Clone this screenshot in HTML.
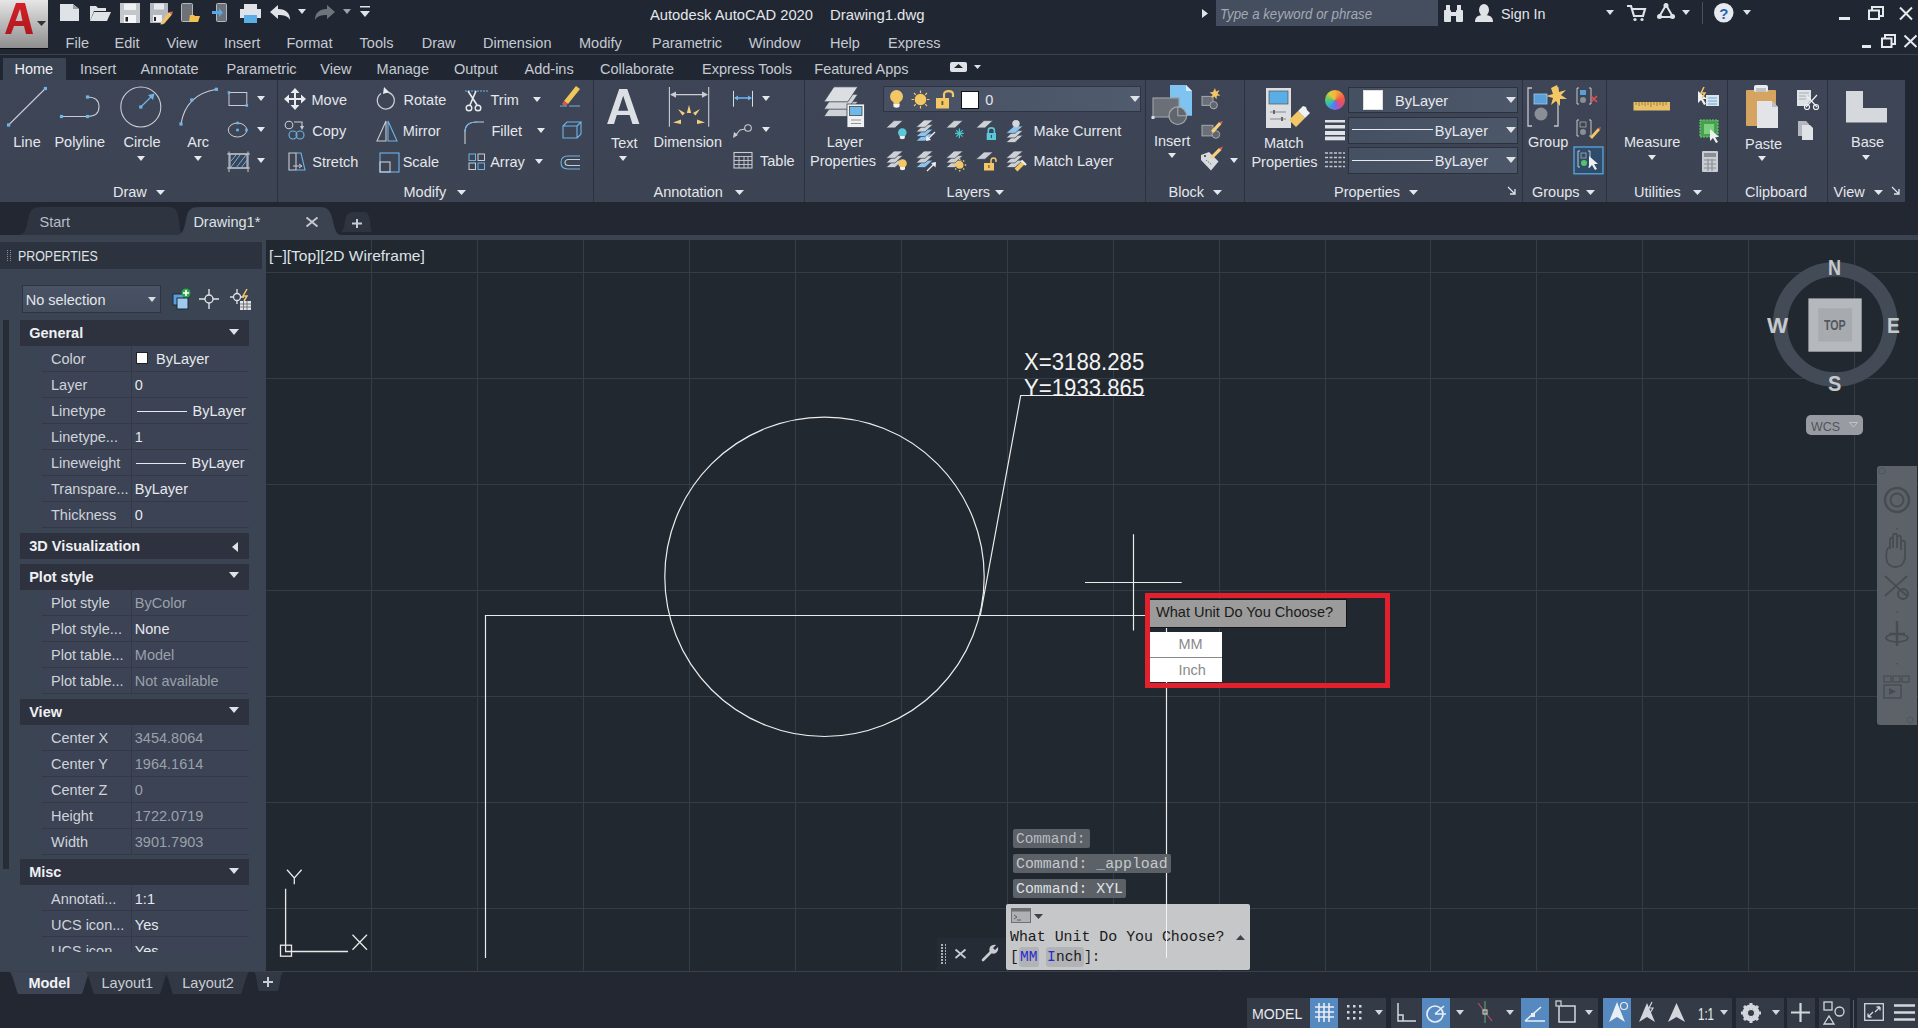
<!DOCTYPE html><html><head><meta charset="utf-8"><style>
html,body{margin:0;padding:0;width:1918px;height:1028px;overflow:hidden;background:#212732;}
.t{position:absolute;white-space:nowrap;line-height:1;}
.b{position:absolute;}
svg.b{overflow:visible;}
</style></head><body>
<div class="b" style="left:0px;top:0px;width:1918px;height:54px;background:#212732;"></div>
<div class="b" style="left:0px;top:54px;width:1918px;height:1px;background:#3b424d;"></div>
<div class="b" style="left:0px;top:55px;width:1918px;height:25px;background:#212732;"></div>
<div class="b" style="left:3px;top:58px;width:63px;height:22px;background:#3b4453;"></div>
<div class="b" style="left:0px;top:80px;width:277px;height:122px;background:linear-gradient(#3e4556,#3c4353);"></div>
<div class="b" style="left:278px;top:80px;width:315px;height:122px;background:linear-gradient(#3e4556,#3c4353);"></div>
<div class="b" style="left:594px;top:80px;width:210px;height:122px;background:linear-gradient(#3e4556,#3c4353);"></div>
<div class="b" style="left:805px;top:80px;width:340px;height:122px;background:linear-gradient(#3e4556,#3c4353);"></div>
<div class="b" style="left:1146px;top:80px;width:98px;height:122px;background:linear-gradient(#3e4556,#3c4353);"></div>
<div class="b" style="left:1245px;top:80px;width:277px;height:122px;background:linear-gradient(#3e4556,#3c4353);"></div>
<div class="b" style="left:1523px;top:80px;width:83px;height:122px;background:linear-gradient(#3e4556,#3c4353);"></div>
<div class="b" style="left:1607px;top:80px;width:120px;height:122px;background:linear-gradient(#3e4556,#3c4353);"></div>
<div class="b" style="left:1728px;top:80px;width:99px;height:122px;background:linear-gradient(#3e4556,#3c4353);"></div>
<div class="b" style="left:1828px;top:80px;width:77px;height:122px;background:linear-gradient(#3e4556,#3c4353);"></div>
<div class="b" style="left:277px;top:80px;width:1px;height:122px;background:#2c323d;"></div>
<div class="b" style="left:593px;top:80px;width:1px;height:122px;background:#2c323d;"></div>
<div class="b" style="left:804px;top:80px;width:1px;height:122px;background:#2c323d;"></div>
<div class="b" style="left:1145px;top:80px;width:1px;height:122px;background:#2c323d;"></div>
<div class="b" style="left:1244px;top:80px;width:1px;height:122px;background:#2c323d;"></div>
<div class="b" style="left:1522px;top:80px;width:1px;height:122px;background:#2c323d;"></div>
<div class="b" style="left:1606px;top:80px;width:1px;height:122px;background:#2c323d;"></div>
<div class="b" style="left:1727px;top:80px;width:1px;height:122px;background:#2c323d;"></div>
<div class="b" style="left:1827px;top:80px;width:1px;height:122px;background:#2c323d;"></div>
<div class="b" style="left:0px;top:202px;width:1918px;height:33px;background:#222731;"></div>
<div class="b" style="left:0px;top:235px;width:1918px;height:5px;background:#3b4250;"></div>
<svg class="b" style="left:18px;top:207px" width="165" height="28" viewBox="0 0 165 28"><path d="M0 28 C6 28 8 24 10 12 C12 3 14 0 24 0 H150 C158 0 160 4 161 14 C162 24 163 28 165 28Z" fill="#2e3440"/></svg>
<svg class="b" style="left:176px;top:207px" width="165" height="28" viewBox="0 0 165 28"><path d="M0 28 C6 28 8 24 10 12 C12 3 14 0 24 0 H144 C152 0 155 4 157 14 C159 24 161 28 165 28Z" fill="#3b4250"/></svg>
<svg class="b" style="left:340px;top:212px" width="32" height="20" viewBox="0 0 32 20"><path d="M0 20 C3 20 4 16 5 9 C6 3 8 0 13 0 H24 C28 0 29 3 30 9 C31 16 31 20 32 20Z" fill="#2e3440"/></svg>
<div class="b" style="left:0px;top:240px;width:266px;height:731px;background:#3b4453;"></div>
<div class="b" style="left:0px;top:242px;width:262px;height:27px;background:#2d333e;"></div>
<div class="b" style="left:266px;top:240px;width:1652px;height:731px;background:#212830;"></div>
<div class="b" style="left:0px;top:971px;width:1918px;height:57px;background:#222731;"></div>
<div class="t" style="left:649.5px;top:7.3px;font-size:15px;color:#e3e6ea;font-weight:normal;font-family:'Liberation Sans', sans-serif;font-style:normal;transform:scaleX(0.982);transform-origin:0 0;">Autodesk AutoCAD 2020</div>
<div class="t" style="left:829.5px;top:7.3px;font-size:15px;color:#e3e6ea;font-weight:normal;font-family:'Liberation Sans', sans-serif;font-style:normal;transform:scaleX(0.994);transform-origin:0 0;">Drawing1.dwg</div>
<div class="t" style="left:65.6px;top:36.0px;font-size:14.5px;color:#c5cad2;font-weight:normal;font-family:'Liberation Sans', sans-serif;font-style:normal;">File</div>
<div class="t" style="left:114.6px;top:36.0px;font-size:14.5px;color:#c5cad2;font-weight:normal;font-family:'Liberation Sans', sans-serif;font-style:normal;">Edit</div>
<div class="t" style="left:166.4px;top:36.0px;font-size:14.5px;color:#c5cad2;font-weight:normal;font-family:'Liberation Sans', sans-serif;font-style:normal;">View</div>
<div class="t" style="left:224px;top:36.0px;font-size:14.5px;color:#c5cad2;font-weight:normal;font-family:'Liberation Sans', sans-serif;font-style:normal;">Insert</div>
<div class="t" style="left:286.5px;top:36.0px;font-size:14.5px;color:#c5cad2;font-weight:normal;font-family:'Liberation Sans', sans-serif;font-style:normal;">Format</div>
<div class="t" style="left:359.6px;top:36.0px;font-size:14.5px;color:#c5cad2;font-weight:normal;font-family:'Liberation Sans', sans-serif;font-style:normal;">Tools</div>
<div class="t" style="left:421.7px;top:36.0px;font-size:14.5px;color:#c5cad2;font-weight:normal;font-family:'Liberation Sans', sans-serif;font-style:normal;">Draw</div>
<div class="t" style="left:483px;top:36.0px;font-size:14.5px;color:#c5cad2;font-weight:normal;font-family:'Liberation Sans', sans-serif;font-style:normal;">Dimension</div>
<div class="t" style="left:579px;top:36.0px;font-size:14.5px;color:#c5cad2;font-weight:normal;font-family:'Liberation Sans', sans-serif;font-style:normal;">Modify</div>
<div class="t" style="left:652px;top:36.0px;font-size:14.5px;color:#c5cad2;font-weight:normal;font-family:'Liberation Sans', sans-serif;font-style:normal;">Parametric</div>
<div class="t" style="left:748.8px;top:36.0px;font-size:14.5px;color:#c5cad2;font-weight:normal;font-family:'Liberation Sans', sans-serif;font-style:normal;">Window</div>
<div class="t" style="left:830px;top:36.0px;font-size:14.5px;color:#c5cad2;font-weight:normal;font-family:'Liberation Sans', sans-serif;font-style:normal;">Help</div>
<div class="t" style="left:888px;top:36.0px;font-size:14.5px;color:#c5cad2;font-weight:normal;font-family:'Liberation Sans', sans-serif;font-style:normal;">Express</div>
<div class="t" style="left:14.5px;top:61.5px;font-size:14.5px;color:#eef0f3;font-weight:normal;font-family:'Liberation Sans', sans-serif;font-style:normal;">Home</div>
<div class="t" style="left:80px;top:61.5px;font-size:14.5px;color:#c5cad2;font-weight:normal;font-family:'Liberation Sans', sans-serif;font-style:normal;">Insert</div>
<div class="t" style="left:140.6px;top:61.5px;font-size:14.5px;color:#c5cad2;font-weight:normal;font-family:'Liberation Sans', sans-serif;font-style:normal;">Annotate</div>
<div class="t" style="left:226.5px;top:61.5px;font-size:14.5px;color:#c5cad2;font-weight:normal;font-family:'Liberation Sans', sans-serif;font-style:normal;">Parametric</div>
<div class="t" style="left:320.3px;top:61.5px;font-size:14.5px;color:#c5cad2;font-weight:normal;font-family:'Liberation Sans', sans-serif;font-style:normal;">View</div>
<div class="t" style="left:376.6px;top:61.5px;font-size:14.5px;color:#c5cad2;font-weight:normal;font-family:'Liberation Sans', sans-serif;font-style:normal;">Manage</div>
<div class="t" style="left:454px;top:61.5px;font-size:14.5px;color:#c5cad2;font-weight:normal;font-family:'Liberation Sans', sans-serif;font-style:normal;">Output</div>
<div class="t" style="left:524.5px;top:61.5px;font-size:14.5px;color:#c5cad2;font-weight:normal;font-family:'Liberation Sans', sans-serif;font-style:normal;">Add-ins</div>
<div class="t" style="left:600px;top:61.5px;font-size:14.5px;color:#c5cad2;font-weight:normal;font-family:'Liberation Sans', sans-serif;font-style:normal;">Collaborate</div>
<div class="t" style="left:702px;top:61.5px;font-size:14.5px;color:#c5cad2;font-weight:normal;font-family:'Liberation Sans', sans-serif;font-style:normal;">Express Tools</div>
<div class="t" style="left:814.3px;top:61.5px;font-size:14.5px;color:#c5cad2;font-weight:normal;font-family:'Liberation Sans', sans-serif;font-style:normal;">Featured Apps</div>
<div class="t" style="left:113px;top:184.7px;font-size:14.5px;color:#e4e7eb;font-weight:normal;font-family:'Liberation Sans', sans-serif;font-style:normal;">Draw</div>
<svg class="b" style="left:155.5px;top:189.5px;" width="9" height="5" viewBox="0 0 9 5"><path d="M0 0H9L4.5 5Z" fill="#e4e7eb"/></svg>
<div class="t" style="left:403.5px;top:184.7px;font-size:14.5px;color:#e4e7eb;font-weight:normal;font-family:'Liberation Sans', sans-serif;font-style:normal;">Modify</div>
<svg class="b" style="left:457.3px;top:189.5px;" width="9" height="5" viewBox="0 0 9 5"><path d="M0 0H9L4.5 5Z" fill="#e4e7eb"/></svg>
<div class="t" style="left:653.5px;top:184.7px;font-size:14.5px;color:#e4e7eb;font-weight:normal;font-family:'Liberation Sans', sans-serif;font-style:normal;">Annotation</div>
<svg class="b" style="left:735.2px;top:189.5px;" width="9" height="5" viewBox="0 0 9 5"><path d="M0 0H9L4.5 5Z" fill="#e4e7eb"/></svg>
<div class="t" style="left:946.6px;top:184.7px;font-size:14.5px;color:#e4e7eb;font-weight:normal;font-family:'Liberation Sans', sans-serif;font-style:normal;">Layers</div>
<svg class="b" style="left:994.5px;top:189.5px;" width="9" height="5" viewBox="0 0 9 5"><path d="M0 0H9L4.5 5Z" fill="#e4e7eb"/></svg>
<div class="t" style="left:1168.5px;top:184.7px;font-size:14.5px;color:#e4e7eb;font-weight:normal;font-family:'Liberation Sans', sans-serif;font-style:normal;">Block</div>
<svg class="b" style="left:1212.5px;top:189.5px;" width="9" height="5" viewBox="0 0 9 5"><path d="M0 0H9L4.5 5Z" fill="#e4e7eb"/></svg>
<div class="t" style="left:1334px;top:184.7px;font-size:14.5px;color:#e4e7eb;font-weight:normal;font-family:'Liberation Sans', sans-serif;font-style:normal;">Properties</div>
<svg class="b" style="left:1408.9px;top:189.5px;" width="9" height="5" viewBox="0 0 9 5"><path d="M0 0H9L4.5 5Z" fill="#e4e7eb"/></svg>
<div class="t" style="left:1532px;top:184.7px;font-size:14.5px;color:#e4e7eb;font-weight:normal;font-family:'Liberation Sans', sans-serif;font-style:normal;">Groups</div>
<svg class="b" style="left:1585.5px;top:189.5px;" width="9" height="5" viewBox="0 0 9 5"><path d="M0 0H9L4.5 5Z" fill="#e4e7eb"/></svg>
<div class="t" style="left:1634px;top:184.7px;font-size:14.5px;color:#e4e7eb;font-weight:normal;font-family:'Liberation Sans', sans-serif;font-style:normal;">Utilities</div>
<svg class="b" style="left:1692.5px;top:189.5px;" width="9" height="5" viewBox="0 0 9 5"><path d="M0 0H9L4.5 5Z" fill="#e4e7eb"/></svg>
<div class="t" style="left:1745px;top:184.7px;font-size:14.5px;color:#e4e7eb;font-weight:normal;font-family:'Liberation Sans', sans-serif;font-style:normal;">Clipboard</div>
<div class="t" style="left:1833.5px;top:184.7px;font-size:14.5px;color:#e4e7eb;font-weight:normal;font-family:'Liberation Sans', sans-serif;font-style:normal;">View</div>
<svg class="b" style="left:1874.0px;top:189.5px;" width="9" height="5" viewBox="0 0 9 5"><path d="M0 0H9L4.5 5Z" fill="#e4e7eb"/></svg>
<div class="t" style="left:13.3px;top:134.7px;font-size:14.5px;color:#e4e7eb;font-weight:normal;font-family:'Liberation Sans', sans-serif;font-style:normal;">Line</div>
<div class="t" style="left:54.4px;top:134.7px;font-size:14.5px;color:#e4e7eb;font-weight:normal;font-family:'Liberation Sans', sans-serif;font-style:normal;">Polyline</div>
<div class="t" style="left:123.6px;top:134.7px;font-size:14.5px;color:#e4e7eb;font-weight:normal;font-family:'Liberation Sans', sans-serif;font-style:normal;">Circle</div>
<div class="t" style="left:187.3px;top:134.7px;font-size:14.5px;color:#e4e7eb;font-weight:normal;font-family:'Liberation Sans', sans-serif;font-style:normal;">Arc</div>
<svg class="b" style="left:137.0px;top:155.5px;" width="8" height="5" viewBox="0 0 8 5"><path d="M0 0H8L4.0 5Z" fill="#e4e7eb"/></svg>
<svg class="b" style="left:194.4px;top:155.5px;" width="8" height="5" viewBox="0 0 8 5"><path d="M0 0H8L4.0 5Z" fill="#e4e7eb"/></svg>
<div class="t" style="left:311.5px;top:92.7px;font-size:14.5px;color:#e4e7eb;font-weight:normal;font-family:'Liberation Sans', sans-serif;font-style:normal;">Move</div>
<div class="t" style="left:403.5px;top:92.7px;font-size:14.5px;color:#e4e7eb;font-weight:normal;font-family:'Liberation Sans', sans-serif;font-style:normal;">Rotate</div>
<div class="t" style="left:490.5px;top:92.7px;font-size:14.5px;color:#e4e7eb;font-weight:normal;font-family:'Liberation Sans', sans-serif;font-style:normal;">Trim</div>
<div class="t" style="left:312.3px;top:123.7px;font-size:14.5px;color:#e4e7eb;font-weight:normal;font-family:'Liberation Sans', sans-serif;font-style:normal;">Copy</div>
<div class="t" style="left:402.7px;top:123.7px;font-size:14.5px;color:#e4e7eb;font-weight:normal;font-family:'Liberation Sans', sans-serif;font-style:normal;">Mirror</div>
<div class="t" style="left:491.4px;top:123.7px;font-size:14.5px;color:#e4e7eb;font-weight:normal;font-family:'Liberation Sans', sans-serif;font-style:normal;">Fillet</div>
<div class="t" style="left:312.3px;top:154.7px;font-size:14.5px;color:#e4e7eb;font-weight:normal;font-family:'Liberation Sans', sans-serif;font-style:normal;">Stretch</div>
<div class="t" style="left:402.7px;top:154.7px;font-size:14.5px;color:#e4e7eb;font-weight:normal;font-family:'Liberation Sans', sans-serif;font-style:normal;">Scale</div>
<div class="t" style="left:490.2px;top:154.7px;font-size:14.5px;color:#e4e7eb;font-weight:normal;font-family:'Liberation Sans', sans-serif;font-style:normal;">Array</div>
<svg class="b" style="left:533.0px;top:96.5px;" width="8" height="5" viewBox="0 0 8 5"><path d="M0 0H8L4.0 5Z" fill="#e4e7eb"/></svg>
<svg class="b" style="left:536.9px;top:127.5px;" width="8" height="5" viewBox="0 0 8 5"><path d="M0 0H8L4.0 5Z" fill="#e4e7eb"/></svg>
<svg class="b" style="left:534.7px;top:158.5px;" width="8" height="5" viewBox="0 0 8 5"><path d="M0 0H8L4.0 5Z" fill="#e4e7eb"/></svg>
<svg class="b" style="left:257.0px;top:95.5px;" width="8" height="5" viewBox="0 0 8 5"><path d="M0 0H8L4.0 5Z" fill="#e4e7eb"/></svg>
<svg class="b" style="left:257.0px;top:127.1px;" width="8" height="5" viewBox="0 0 8 5"><path d="M0 0H8L4.0 5Z" fill="#e4e7eb"/></svg>
<svg class="b" style="left:257.0px;top:158.1px;" width="8" height="5" viewBox="0 0 8 5"><path d="M0 0H8L4.0 5Z" fill="#e4e7eb"/></svg>
<div class="t" style="left:611px;top:136.0px;font-size:14.5px;color:#e4e7eb;font-weight:normal;font-family:'Liberation Sans', sans-serif;font-style:normal;">Text</div>
<svg class="b" style="left:619.0px;top:155.7px;" width="8" height="5" viewBox="0 0 8 5"><path d="M0 0H8L4.0 5Z" fill="#e4e7eb"/></svg>
<div class="t" style="left:653.5px;top:134.7px;font-size:14.5px;color:#e4e7eb;font-weight:normal;font-family:'Liberation Sans', sans-serif;font-style:normal;">Dimension</div>
<div class="t" style="left:760px;top:154.2px;font-size:14.5px;color:#e4e7eb;font-weight:normal;font-family:'Liberation Sans', sans-serif;font-style:normal;">Table</div>
<svg class="b" style="left:762.0px;top:95.9px;" width="8" height="5" viewBox="0 0 8 5"><path d="M0 0H8L4.0 5Z" fill="#e4e7eb"/></svg>
<svg class="b" style="left:762.0px;top:126.9px;" width="8" height="5" viewBox="0 0 8 5"><path d="M0 0H8L4.0 5Z" fill="#e4e7eb"/></svg>
<div class="t" style="left:826.7px;top:134.7px;font-size:14.5px;color:#e4e7eb;font-weight:normal;font-family:'Liberation Sans', sans-serif;font-style:normal;">Layer</div>
<div class="t" style="left:810px;top:154.2px;font-size:14.5px;color:#e4e7eb;font-weight:normal;font-family:'Liberation Sans', sans-serif;font-style:normal;">Properties</div>
<div class="t" style="left:1033.5px;top:123.7px;font-size:14.5px;color:#e4e7eb;font-weight:normal;font-family:'Liberation Sans', sans-serif;font-style:normal;">Make Current</div>
<div class="t" style="left:1033.5px;top:154.0px;font-size:14.5px;color:#e4e7eb;font-weight:normal;font-family:'Liberation Sans', sans-serif;font-style:normal;">Match Layer</div>
<div class="t" style="left:1154px;top:133.7px;font-size:14.5px;color:#e4e7eb;font-weight:normal;font-family:'Liberation Sans', sans-serif;font-style:normal;">Insert</div>
<svg class="b" style="left:1167.5px;top:152.5px;" width="8" height="5" viewBox="0 0 8 5"><path d="M0 0H8L4.0 5Z" fill="#e4e7eb"/></svg>
<svg class="b" style="left:1230.0px;top:157.5px;" width="8" height="5" viewBox="0 0 8 5"><path d="M0 0H8L4.0 5Z" fill="#e4e7eb"/></svg>
<div class="t" style="left:1264px;top:135.7px;font-size:14.5px;color:#e4e7eb;font-weight:normal;font-family:'Liberation Sans', sans-serif;font-style:normal;">Match</div>
<div class="t" style="left:1251.4px;top:155.1px;font-size:14.5px;color:#e4e7eb;font-weight:normal;font-family:'Liberation Sans', sans-serif;font-style:normal;">Properties</div>
<div class="t" style="left:1528px;top:135.2px;font-size:14.5px;color:#e4e7eb;font-weight:normal;font-family:'Liberation Sans', sans-serif;font-style:normal;">Group</div>
<div class="t" style="left:1624px;top:135.2px;font-size:14.5px;color:#e4e7eb;font-weight:normal;font-family:'Liberation Sans', sans-serif;font-style:normal;">Measure</div>
<svg class="b" style="left:1647.8px;top:155.0px;" width="8" height="5" viewBox="0 0 8 5"><path d="M0 0H8L4.0 5Z" fill="#e4e7eb"/></svg>
<div class="t" style="left:1745px;top:136.5px;font-size:14.5px;color:#e4e7eb;font-weight:normal;font-family:'Liberation Sans', sans-serif;font-style:normal;">Paste</div>
<svg class="b" style="left:1757.8px;top:156.3px;" width="8" height="5" viewBox="0 0 8 5"><path d="M0 0H8L4.0 5Z" fill="#e4e7eb"/></svg>
<div class="t" style="left:1851px;top:135.2px;font-size:14.5px;color:#e4e7eb;font-weight:normal;font-family:'Liberation Sans', sans-serif;font-style:normal;">Base</div>
<svg class="b" style="left:1862.0px;top:154.5px;" width="8" height="5" viewBox="0 0 8 5"><path d="M0 0H8L4.0 5Z" fill="#e4e7eb"/></svg>
<div class="t" style="left:18px;top:248.9px;font-size:14.5px;color:#dfe2e7;font-weight:normal;font-family:'Liberation Sans', sans-serif;font-style:normal;transform:scaleX(0.855);transform-origin:0 0;">PROPERTIES</div>
<div class="b" style="left:7px;top:250px;width:1px;height:1px;background:#8a9099;"></div>
<div class="b" style="left:10px;top:250px;width:1px;height:1px;background:#8a9099;"></div>
<div class="b" style="left:7px;top:252px;width:1px;height:1px;background:#8a9099;"></div>
<div class="b" style="left:10px;top:252px;width:1px;height:1px;background:#8a9099;"></div>
<div class="b" style="left:7px;top:254px;width:1px;height:1px;background:#8a9099;"></div>
<div class="b" style="left:10px;top:254px;width:1px;height:1px;background:#8a9099;"></div>
<div class="b" style="left:7px;top:256px;width:1px;height:1px;background:#8a9099;"></div>
<div class="b" style="left:10px;top:256px;width:1px;height:1px;background:#8a9099;"></div>
<div class="b" style="left:7px;top:258px;width:1px;height:1px;background:#8a9099;"></div>
<div class="b" style="left:10px;top:258px;width:1px;height:1px;background:#8a9099;"></div>
<div class="b" style="left:7px;top:260px;width:1px;height:1px;background:#8a9099;"></div>
<div class="b" style="left:10px;top:260px;width:1px;height:1px;background:#8a9099;"></div>
<div class="b" style="left:22px;top:285px;width:139px;height:28px;background:linear-gradient(#4a5365,#434c5d);border:1px solid #2f3540;box-sizing:border-box;"></div>
<div class="t" style="left:25.7px;top:293.0px;font-size:14.5px;color:#e3e6ea;font-weight:normal;font-family:'Liberation Sans', sans-serif;font-style:normal;">No selection</div>
<svg class="b" style="left:147.7px;top:296.9px;" width="8" height="5" viewBox="0 0 8 5"><path d="M0 0H8L4.0 5Z" fill="#d8dce2"/></svg>
<div class="b" style="left:3px;top:320px;width:6px;height:549px;background:#272c35;"></div>
<div class="b" style="left:20px;top:320px;width:229px;height:26px;background:#2d323e;"></div>
<div class="t" style="left:29.2px;top:326.3px;font-size:14.5px;color:#eef0f3;font-weight:bold;font-family:'Liberation Sans', sans-serif;font-style:normal;">General</div>
<svg class="b" style="left:229.0px;top:328.5px;" width="10" height="6" viewBox="0 0 10 6"><path d="M0 0H10L5.0 6Z" fill="#dfe2e7"/></svg>
<div class="b" style="left:42px;top:346px;width:207px;height:26px;background:#3c4354;"></div>
<div class="b" style="left:42px;top:371px;width:207px;height:1px;background:#333a46;"></div>
<div class="b" style="left:131px;top:346px;width:1px;height:26px;background:#333a46;"></div>
<div class="t" style="left:51px;top:352.3px;font-size:14.5px;color:#cfd3da;font-weight:normal;font-family:'Liberation Sans', sans-serif;font-style:normal;">Color</div>
<div class="b" style="left:42px;top:372px;width:207px;height:26px;background:#3c4354;"></div>
<div class="b" style="left:42px;top:397px;width:207px;height:1px;background:#333a46;"></div>
<div class="b" style="left:131px;top:372px;width:1px;height:26px;background:#333a46;"></div>
<div class="t" style="left:51px;top:378.3px;font-size:14.5px;color:#cfd3da;font-weight:normal;font-family:'Liberation Sans', sans-serif;font-style:normal;">Layer</div>
<div class="t" style="left:134.8px;top:378.3px;font-size:14.5px;color:#e6e9ed;font-weight:normal;font-family:'Liberation Sans', sans-serif;font-style:normal;">0</div>
<div class="b" style="left:42px;top:398px;width:207px;height:26px;background:#3c4354;"></div>
<div class="b" style="left:42px;top:423px;width:207px;height:1px;background:#333a46;"></div>
<div class="b" style="left:131px;top:398px;width:1px;height:26px;background:#333a46;"></div>
<div class="t" style="left:51px;top:404.3px;font-size:14.5px;color:#cfd3da;font-weight:normal;font-family:'Liberation Sans', sans-serif;font-style:normal;">Linetype</div>
<div class="b" style="left:42px;top:424px;width:207px;height:26px;background:#3c4354;"></div>
<div class="b" style="left:42px;top:449px;width:207px;height:1px;background:#333a46;"></div>
<div class="b" style="left:131px;top:424px;width:1px;height:26px;background:#333a46;"></div>
<div class="t" style="left:51px;top:430.3px;font-size:14.5px;color:#cfd3da;font-weight:normal;font-family:'Liberation Sans', sans-serif;font-style:normal;">Linetype...</div>
<div class="t" style="left:134.8px;top:430.3px;font-size:14.5px;color:#e6e9ed;font-weight:normal;font-family:'Liberation Sans', sans-serif;font-style:normal;">1</div>
<div class="b" style="left:42px;top:450px;width:207px;height:26px;background:#3c4354;"></div>
<div class="b" style="left:42px;top:475px;width:207px;height:1px;background:#333a46;"></div>
<div class="b" style="left:131px;top:450px;width:1px;height:26px;background:#333a46;"></div>
<div class="t" style="left:51px;top:456.3px;font-size:14.5px;color:#cfd3da;font-weight:normal;font-family:'Liberation Sans', sans-serif;font-style:normal;">Lineweight</div>
<div class="b" style="left:42px;top:476px;width:207px;height:26px;background:#3c4354;"></div>
<div class="b" style="left:42px;top:501px;width:207px;height:1px;background:#333a46;"></div>
<div class="b" style="left:131px;top:476px;width:1px;height:26px;background:#333a46;"></div>
<div class="t" style="left:51px;top:482.3px;font-size:14.5px;color:#cfd3da;font-weight:normal;font-family:'Liberation Sans', sans-serif;font-style:normal;">Transpare...</div>
<div class="t" style="left:134.8px;top:482.3px;font-size:14.5px;color:#e6e9ed;font-weight:normal;font-family:'Liberation Sans', sans-serif;font-style:normal;">ByLayer</div>
<div class="b" style="left:42px;top:502px;width:207px;height:26px;background:#3c4354;"></div>
<div class="b" style="left:42px;top:527px;width:207px;height:1px;background:#333a46;"></div>
<div class="b" style="left:131px;top:502px;width:1px;height:26px;background:#333a46;"></div>
<div class="t" style="left:51px;top:508.3px;font-size:14.5px;color:#cfd3da;font-weight:normal;font-family:'Liberation Sans', sans-serif;font-style:normal;">Thickness</div>
<div class="t" style="left:134.8px;top:508.3px;font-size:14.5px;color:#e6e9ed;font-weight:normal;font-family:'Liberation Sans', sans-serif;font-style:normal;">0</div>
<div class="b" style="left:137px;top:411px;width:50px;height:1px;background:#e6e9ed;"></div>
<div class="t" style="left:192.6px;top:404.3px;font-size:14.5px;color:#e6e9ed;font-weight:normal;font-family:'Liberation Sans', sans-serif;font-style:normal;">ByLayer</div>
<div class="b" style="left:136px;top:463px;width:50px;height:1px;background:#e6e9ed;"></div>
<div class="t" style="left:191.5px;top:456.3px;font-size:14.5px;color:#e6e9ed;font-weight:normal;font-family:'Liberation Sans', sans-serif;font-style:normal;">ByLayer</div>
<div class="b" style="left:136px;top:352px;width:12px;height:12px;background:#ffffff;border:1px solid #222;box-sizing:border-box;"></div>
<div class="t" style="left:156px;top:352.0px;font-size:14.5px;color:#e6e9ed;font-weight:normal;font-family:'Liberation Sans', sans-serif;font-style:normal;">ByLayer</div>
<div class="b" style="left:20px;top:532.5px;width:229px;height:26px;background:#2d323e;"></div>
<div class="t" style="left:29.2px;top:538.8px;font-size:14.5px;color:#eef0f3;font-weight:bold;font-family:'Liberation Sans', sans-serif;font-style:normal;">3D Visualization</div>
<svg class="b" style="left:232px;top:541.5px;" width="6" height="10" viewBox="0 0 6 10"><path d="M6 0V10L0 5Z" fill="#dfe2e7"/></svg>
<div class="b" style="left:20px;top:563.5px;width:229px;height:26px;background:#2d323e;"></div>
<div class="t" style="left:29.2px;top:569.8px;font-size:14.5px;color:#eef0f3;font-weight:bold;font-family:'Liberation Sans', sans-serif;font-style:normal;">Plot style</div>
<svg class="b" style="left:229.0px;top:572.0px;" width="10" height="6" viewBox="0 0 10 6"><path d="M0 0H10L5.0 6Z" fill="#dfe2e7"/></svg>
<div class="b" style="left:42px;top:589.5px;width:207px;height:26px;background:#3c4354;"></div>
<div class="b" style="left:42px;top:614.5px;width:207px;height:1px;background:#333a46;"></div>
<div class="b" style="left:131px;top:589.5px;width:1px;height:26px;background:#333a46;"></div>
<div class="t" style="left:51px;top:595.8px;font-size:14.5px;color:#cfd3da;font-weight:normal;font-family:'Liberation Sans', sans-serif;font-style:normal;">Plot style</div>
<div class="t" style="left:134.8px;top:595.8px;font-size:14.5px;color:#9aa1ab;font-weight:normal;font-family:'Liberation Sans', sans-serif;font-style:normal;">ByColor</div>
<div class="b" style="left:42px;top:615.5px;width:207px;height:26px;background:#3c4354;"></div>
<div class="b" style="left:42px;top:640.5px;width:207px;height:1px;background:#333a46;"></div>
<div class="b" style="left:131px;top:615.5px;width:1px;height:26px;background:#333a46;"></div>
<div class="t" style="left:51px;top:621.8px;font-size:14.5px;color:#cfd3da;font-weight:normal;font-family:'Liberation Sans', sans-serif;font-style:normal;">Plot style...</div>
<div class="t" style="left:134.8px;top:621.8px;font-size:14.5px;color:#e6e9ed;font-weight:normal;font-family:'Liberation Sans', sans-serif;font-style:normal;">None</div>
<div class="b" style="left:42px;top:641.5px;width:207px;height:26px;background:#3c4354;"></div>
<div class="b" style="left:42px;top:666.5px;width:207px;height:1px;background:#333a46;"></div>
<div class="b" style="left:131px;top:641.5px;width:1px;height:26px;background:#333a46;"></div>
<div class="t" style="left:51px;top:647.8px;font-size:14.5px;color:#cfd3da;font-weight:normal;font-family:'Liberation Sans', sans-serif;font-style:normal;">Plot table...</div>
<div class="t" style="left:134.8px;top:647.8px;font-size:14.5px;color:#9aa1ab;font-weight:normal;font-family:'Liberation Sans', sans-serif;font-style:normal;">Model</div>
<div class="b" style="left:42px;top:667.5px;width:207px;height:26px;background:#3c4354;"></div>
<div class="b" style="left:42px;top:692.5px;width:207px;height:1px;background:#333a46;"></div>
<div class="b" style="left:131px;top:667.5px;width:1px;height:26px;background:#333a46;"></div>
<div class="t" style="left:51px;top:673.8px;font-size:14.5px;color:#cfd3da;font-weight:normal;font-family:'Liberation Sans', sans-serif;font-style:normal;">Plot table...</div>
<div class="t" style="left:134.8px;top:673.8px;font-size:14.5px;color:#9aa1ab;font-weight:normal;font-family:'Liberation Sans', sans-serif;font-style:normal;">Not available</div>
<div class="b" style="left:20px;top:698.5px;width:229px;height:26px;background:#2d323e;"></div>
<div class="t" style="left:29.2px;top:704.8px;font-size:14.5px;color:#eef0f3;font-weight:bold;font-family:'Liberation Sans', sans-serif;font-style:normal;">View</div>
<svg class="b" style="left:229.0px;top:707.0px;" width="10" height="6" viewBox="0 0 10 6"><path d="M0 0H10L5.0 6Z" fill="#dfe2e7"/></svg>
<div class="b" style="left:42px;top:724.5px;width:207px;height:26px;background:#3c4354;"></div>
<div class="b" style="left:42px;top:749.5px;width:207px;height:1px;background:#333a46;"></div>
<div class="b" style="left:131px;top:724.5px;width:1px;height:26px;background:#333a46;"></div>
<div class="t" style="left:51px;top:730.8px;font-size:14.5px;color:#cfd3da;font-weight:normal;font-family:'Liberation Sans', sans-serif;font-style:normal;">Center X</div>
<div class="t" style="left:134.8px;top:730.8px;font-size:14.5px;color:#9aa1ab;font-weight:normal;font-family:'Liberation Sans', sans-serif;font-style:normal;">3454.8064</div>
<div class="b" style="left:42px;top:750.5px;width:207px;height:26px;background:#3c4354;"></div>
<div class="b" style="left:42px;top:775.5px;width:207px;height:1px;background:#333a46;"></div>
<div class="b" style="left:131px;top:750.5px;width:1px;height:26px;background:#333a46;"></div>
<div class="t" style="left:51px;top:756.8px;font-size:14.5px;color:#cfd3da;font-weight:normal;font-family:'Liberation Sans', sans-serif;font-style:normal;">Center Y</div>
<div class="t" style="left:134.8px;top:756.8px;font-size:14.5px;color:#9aa1ab;font-weight:normal;font-family:'Liberation Sans', sans-serif;font-style:normal;">1964.1614</div>
<div class="b" style="left:42px;top:776.5px;width:207px;height:26px;background:#3c4354;"></div>
<div class="b" style="left:42px;top:801.5px;width:207px;height:1px;background:#333a46;"></div>
<div class="b" style="left:131px;top:776.5px;width:1px;height:26px;background:#333a46;"></div>
<div class="t" style="left:51px;top:782.8px;font-size:14.5px;color:#cfd3da;font-weight:normal;font-family:'Liberation Sans', sans-serif;font-style:normal;">Center Z</div>
<div class="t" style="left:134.8px;top:782.8px;font-size:14.5px;color:#9aa1ab;font-weight:normal;font-family:'Liberation Sans', sans-serif;font-style:normal;">0</div>
<div class="b" style="left:42px;top:802.5px;width:207px;height:26px;background:#3c4354;"></div>
<div class="b" style="left:42px;top:827.5px;width:207px;height:1px;background:#333a46;"></div>
<div class="b" style="left:131px;top:802.5px;width:1px;height:26px;background:#333a46;"></div>
<div class="t" style="left:51px;top:808.8px;font-size:14.5px;color:#cfd3da;font-weight:normal;font-family:'Liberation Sans', sans-serif;font-style:normal;">Height</div>
<div class="t" style="left:134.8px;top:808.8px;font-size:14.5px;color:#9aa1ab;font-weight:normal;font-family:'Liberation Sans', sans-serif;font-style:normal;">1722.0719</div>
<div class="b" style="left:42px;top:828.5px;width:207px;height:26px;background:#3c4354;"></div>
<div class="b" style="left:42px;top:853.5px;width:207px;height:1px;background:#333a46;"></div>
<div class="b" style="left:131px;top:828.5px;width:1px;height:26px;background:#333a46;"></div>
<div class="t" style="left:51px;top:834.8px;font-size:14.5px;color:#cfd3da;font-weight:normal;font-family:'Liberation Sans', sans-serif;font-style:normal;">Width</div>
<div class="t" style="left:134.8px;top:834.8px;font-size:14.5px;color:#9aa1ab;font-weight:normal;font-family:'Liberation Sans', sans-serif;font-style:normal;">3901.7903</div>
<div class="b" style="left:20px;top:859px;width:229px;height:26px;background:#2d323e;"></div>
<div class="t" style="left:29.2px;top:865.3px;font-size:14.5px;color:#eef0f3;font-weight:bold;font-family:'Liberation Sans', sans-serif;font-style:normal;">Misc</div>
<svg class="b" style="left:229.0px;top:867.5px;" width="10" height="6" viewBox="0 0 10 6"><path d="M0 0H10L5.0 6Z" fill="#dfe2e7"/></svg>
<div class="b" style="left:42px;top:885.4px;width:207px;height:26px;background:#3c4354;"></div>
<div class="b" style="left:42px;top:910.4px;width:207px;height:1px;background:#333a46;"></div>
<div class="b" style="left:131px;top:885.4px;width:1px;height:26px;background:#333a46;"></div>
<div class="t" style="left:51px;top:891.7px;font-size:14.5px;color:#cfd3da;font-weight:normal;font-family:'Liberation Sans', sans-serif;font-style:normal;">Annotati...</div>
<div class="t" style="left:134.8px;top:891.7px;font-size:14.5px;color:#e6e9ed;font-weight:normal;font-family:'Liberation Sans', sans-serif;font-style:normal;">1:1</div>
<div class="b" style="left:42px;top:911.4px;width:207px;height:26px;background:#3c4354;"></div>
<div class="b" style="left:42px;top:936.4px;width:207px;height:1px;background:#333a46;"></div>
<div class="b" style="left:131px;top:911.4px;width:1px;height:26px;background:#333a46;"></div>
<div class="t" style="left:51px;top:917.7px;font-size:14.5px;color:#cfd3da;font-weight:normal;font-family:'Liberation Sans', sans-serif;font-style:normal;">UCS icon...</div>
<div class="t" style="left:134.8px;top:917.7px;font-size:14.5px;color:#e6e9ed;font-weight:normal;font-family:'Liberation Sans', sans-serif;font-style:normal;">Yes</div>
<div class="b" style="left:42px;top:937.4px;width:207px;height:26px;background:#3c4354;"></div>
<div class="b" style="left:42px;top:962.4px;width:207px;height:1px;background:#333a46;"></div>
<div class="b" style="left:131px;top:937.4px;width:1px;height:26px;background:#333a46;"></div>
<div class="t" style="left:51px;top:943.7px;font-size:14.5px;color:#cfd3da;font-weight:normal;font-family:'Liberation Sans', sans-serif;font-style:normal;">UCS icon...</div>
<div class="t" style="left:134.8px;top:943.7px;font-size:14.5px;color:#e6e9ed;font-weight:normal;font-family:'Liberation Sans', sans-serif;font-style:normal;">Yes</div>
<svg class="b" style="left:266px;top:240px;" width="1652" height="731" viewBox="0 0 1652 731"><rect x="105" y="0" width="1" height="731" fill="#343c47"/><rect x="211" y="0" width="1" height="731" fill="#343c47"/><rect x="317" y="0" width="1" height="731" fill="#343c47"/><rect x="423" y="0" width="1" height="731" fill="#343c47"/><rect x="529" y="0" width="1" height="731" fill="#343c47"/><rect x="635" y="0" width="1" height="731" fill="#343c47"/><rect x="741" y="0" width="1" height="731" fill="#343c47"/><rect x="847" y="0" width="1" height="731" fill="#343c47"/><rect x="953" y="0" width="1" height="731" fill="#343c47"/><rect x="1059" y="0" width="1" height="731" fill="#343c47"/><rect x="1164" y="0" width="1" height="731" fill="#343c47"/><rect x="1270" y="0" width="1" height="731" fill="#343c47"/><rect x="1376" y="0" width="1" height="731" fill="#343c47"/><rect x="1482" y="0" width="1" height="731" fill="#343c47"/><rect x="1588" y="0" width="1" height="731" fill="#343c47"/><rect x="0" y="32" width="1652" height="1" fill="#343c47"/><rect x="0" y="138" width="1652" height="1" fill="#343c47"/><rect x="0" y="244" width="1652" height="1" fill="#343c47"/><rect x="0" y="350" width="1652" height="1" fill="#343c47"/><rect x="0" y="456" width="1652" height="1" fill="#343c47"/><rect x="0" y="562" width="1652" height="1" fill="#343c47"/><rect x="0" y="668" width="1652" height="1" fill="#343c47"/></svg>
<div class="t" style="left:269.3px;top:248.7px;font-size:14.5px;color:#dfe2e6;font-weight:normal;font-family:'Liberation Sans', sans-serif;font-style:normal;transform:scaleX(1.071);transform-origin:0 0;">[&#8722;][Top][2D Wireframe]</div>
<svg class="b" style="left:266px;top:240px;" width="1652" height="731" viewBox="0 0 1652 731">
<circle cx="558.5" cy="336.8" r="159.7" fill="none" stroke="#ececec" stroke-width="1.2"/>
<path d="M219.5 718 V375.5 H879" fill="none" stroke="#ececec" stroke-width="1.2"/>
<path d="M714.3 375.5 L754.7 155.5 H878.5" fill="none" stroke="#ececec" stroke-width="1.2"/>
<path d="M900.5 387.3 V718" fill="none" stroke="#ececec" stroke-width="1.2"/>
<path d="M867.5 294.2 V390.6 M819 342.5 H915.7" fill="none" stroke="#ececec" stroke-width="1.2"/>
</svg>
<div class="t" style="left:1024.3px;top:351.3px;font-size:23.3px;color:#f2f2f2;font-weight:normal;font-family:'Liberation Sans', sans-serif;font-style:normal;transform:scaleX(0.952);transform-origin:0 0;">X=3188.285</div>
<div class="t" style="left:1024.3px;top:377.1px;font-size:23.3px;color:#f2f2f2;font-weight:normal;font-family:'Liberation Sans', sans-serif;font-style:normal;transform:scaleX(0.952);transform-origin:0 0;">Y=1933.865</div>
<svg class="b" style="left:266px;top:880px;" width="110" height="90" viewBox="0 0 110 90"><path d="M19.6 8.7 V71.5 H82" fill="none" stroke="#e8e8e8" stroke-width="1.3"/>
<rect x="14.5" y="65.2" width="11" height="11" fill="none" stroke="#e8e8e8" stroke-width="1.3"/>
<path d="M21 -10.2 L28.3 -2 L35.6 -10.2 M28.3 -2 V4.3" fill="none" stroke="#e8e8e8" stroke-width="1.3"/>
<path d="M86.5 54.8 L101 69.7 M101 54.8 L86.5 69.7" fill="none" stroke="#e8e8e8" stroke-width="1.3"/></svg>
<div class="b" style="left:1145px;top:593px;width:245px;height:95px;background:transparent;border:5px solid #e3202b;box-sizing:border-box;"></div>
<div class="b" style="left:1150px;top:598.5px;width:197px;height:29.5px;background:#9b9b9b;border-top:1.5px solid #151515;border-right:1.5px solid #151515;border-bottom:1.5px solid #151515;box-sizing:border-box;"></div>
<div class="t" style="left:1155.5px;top:605.0px;font-size:14.5px;color:#1a1a1a;font-weight:normal;font-family:'Liberation Sans', sans-serif;font-style:normal;transform:scaleX(1.003);transform-origin:0 0;">What Unit Do You Choose?</div>
<div class="b" style="left:1150px;top:631.7px;width:72.2px;height:25.8px;background:#ffffff;"></div>
<div class="b" style="left:1150px;top:657px;width:72.2px;height:1px;background:#8a8a8a;"></div>
<div class="b" style="left:1150px;top:658px;width:72.2px;height:24px;background:#ffffff;"></div>
<div class="t" style="left:1178.5px;top:636.9px;font-size:14.5px;color:#8a8a8a;font-weight:normal;font-family:'Liberation Sans', sans-serif;font-style:normal;">MM</div>
<div class="t" style="left:1178.5px;top:662.7px;font-size:14.5px;color:#8a8a8a;font-weight:normal;font-family:'Liberation Sans', sans-serif;font-style:normal;">Inch</div>
<div class="b" style="left:1012.9px;top:829.2px;width:76.9px;height:18.5px;background:#5c6168;border-radius:2px;"></div>
<div class="b" style="left:1012.9px;top:854.2px;width:158.1px;height:18.8px;background:#5c6168;border-radius:2px;"></div>
<div class="b" style="left:1012.9px;top:879.2px;width:112.9px;height:18.6px;background:#5c6168;border-radius:2px;"></div>
<div class="t" style="left:1015.5px;top:832.0px;font-size:14.5px;color:#b9bcc0;font-weight:normal;font-family:'Liberation Mono', monospace;font-style:normal;transform:scaleX(0.998);transform-origin:0 0;">Command:</div>
<div class="t" style="left:1015.5px;top:856.9px;font-size:14.5px;color:#c6c9cd;font-weight:normal;font-family:'Liberation Mono', monospace;font-style:normal;transform:scaleX(1.025);transform-origin:0 0;">Command: _appload</div>
<div class="t" style="left:1015.5px;top:881.9px;font-size:14.5px;color:#dfe1e4;font-weight:normal;font-family:'Liberation Mono', monospace;font-style:normal;transform:scaleX(1.025);transform-origin:0 0;">Command: XYL</div>
<div class="b" style="left:936.5px;top:938px;width:70px;height:32px;background:#262c35;"></div>
<div class="b" style="left:941px;top:944px;width:1.5px;height:1.5px;background:#aab0b8;"></div>
<div class="b" style="left:944.5px;top:944px;width:1.5px;height:1.5px;background:#aab0b8;"></div>
<div class="b" style="left:941px;top:947px;width:1.5px;height:1.5px;background:#aab0b8;"></div>
<div class="b" style="left:944.5px;top:947px;width:1.5px;height:1.5px;background:#aab0b8;"></div>
<div class="b" style="left:941px;top:950px;width:1.5px;height:1.5px;background:#aab0b8;"></div>
<div class="b" style="left:944.5px;top:950px;width:1.5px;height:1.5px;background:#aab0b8;"></div>
<div class="b" style="left:941px;top:953px;width:1.5px;height:1.5px;background:#aab0b8;"></div>
<div class="b" style="left:944.5px;top:953px;width:1.5px;height:1.5px;background:#aab0b8;"></div>
<div class="b" style="left:941px;top:956px;width:1.5px;height:1.5px;background:#aab0b8;"></div>
<div class="b" style="left:944.5px;top:956px;width:1.5px;height:1.5px;background:#aab0b8;"></div>
<div class="b" style="left:941px;top:959px;width:1.5px;height:1.5px;background:#aab0b8;"></div>
<div class="b" style="left:944.5px;top:959px;width:1.5px;height:1.5px;background:#aab0b8;"></div>
<div class="b" style="left:941px;top:962px;width:1.5px;height:1.5px;background:#aab0b8;"></div>
<div class="b" style="left:944.5px;top:962px;width:1.5px;height:1.5px;background:#aab0b8;"></div>
<svg class="b" style="left:954.7px;top:948.6px;" width="11" height="9.5" viewBox="0 0 11 9.5"><path d="M0.5 0.5L10.5 9M10.5 0.5L0.5 9" stroke="#c8ccd2" stroke-width="1.8"/></svg>
<svg class="b" style="left:980.8px;top:943px;" width="19" height="19" viewBox="0 0 19 19"><path d="M2 17L10 9" stroke="#c8ccd2" stroke-width="2.6" stroke-linecap="round"/><path d="M9 9.5C7 5 10 1 15 2L12 5L14 7L17 4C18 9 14 12 10 10Z" fill="#c8ccd2"/></svg>
<div class="b" style="left:1006px;top:904.3px;width:243.8px;height:65.7px;background:#c6c7c9;border-radius:2px;"></div>
<svg class="b" style="left:1010.8px;top:908px;" width="34" height="15" viewBox="0 0 34 15"><rect x="0.5" y="0.5" width="19" height="14" fill="#aeb0b3" stroke="#6d7075"/><rect x="0.5" y="0.5" width="19" height="3" fill="#6d7075"/><path d="M3 7L6 9L3 11M6 12H10" stroke="#55585d" stroke-width="0.9" fill="none"/><path d="M23 6H32L27.5 11Z" fill="#3f4247"/></svg>
<div class="t" style="left:1010px;top:929.7px;font-size:14.5px;color:#1a1a1a;font-weight:normal;font-family:'Liberation Mono', monospace;font-style:normal;transform:scaleX(1.027);transform-origin:0 0;">What Unit Do You Choose?</div>
<div class="b" style="left:1019.4px;top:946.5px;width:20.1px;height:20.9px;background:#b2b3b6;border-radius:3px;"></div>
<div class="b" style="left:1045.5px;top:946.5px;width:38.3px;height:20.9px;background:#b2b3b6;border-radius:3px;"></div>
<div class="t" style="left:1010px;top:949.7px;font-size:14.5px;color:#1a1a1a;font-weight:normal;font-family:'Liberation Mono', monospace;font-style:normal;">[</div>
<div class="t" style="left:1019.6px;top:949.7px;font-size:14.5px;color:#2b2bc8;font-weight:normal;font-family:'Liberation Mono', monospace;font-style:normal;transform:scaleX(1.005);transform-origin:0 0;">MM</div>
<div class="t" style="left:1047px;top:949.7px;font-size:14.5px;color:#2b2bc8;font-weight:normal;font-family:'Liberation Mono', monospace;font-style:normal;">I</div>
<div class="t" style="left:1056px;top:949.7px;font-size:14.5px;color:#1a1a1a;font-weight:normal;font-family:'Liberation Mono', monospace;font-style:normal;transform:scaleX(0.996);transform-origin:0 0;">nch</div>
<div class="t" style="left:1084px;top:949.7px;font-size:14.5px;color:#1a1a1a;font-weight:normal;font-family:'Liberation Mono', monospace;font-style:normal;transform:scaleX(0.919);transform-origin:0 0;">]:</div>
<svg class="b" style="left:1236.3px;top:934.5px;" width="9" height="5" viewBox="0 0 9 5"><path d="M0 5H9L4.5 0Z" fill="#3f4247"/></svg>
<div class="b" style="left:1166px;top:904.3px;width:1.3px;height:54px;background:#f4f4f4;"></div>
<svg class="b" style="left:1772px;top:261px;" width="126" height="126" viewBox="0 0 126 126"><circle cx="63.3" cy="63.4" r="55.2" fill="none" stroke="#434b56" stroke-width="14.6"/>
<rect x="36.4" y="37.4" width="53.3" height="53.3" fill="#b5b9be"/>
<rect x="46.2" y="47.2" width="33.8" height="33.3" fill="#a7abb0"/></svg>
<div class="t" style="left:1824.3px;top:317.6px;font-size:14.4px;color:#53585e;font-weight:bold;font-family:'Liberation Sans', sans-serif;font-style:normal;transform:scaleX(0.740);transform-origin:0 0;">TOP</div>
<div class="t" style="left:1828.4px;top:256.6px;font-size:21.7px;color:#c5c9ce;font-weight:bold;font-family:'Liberation Sans', sans-serif;font-style:normal;transform:scaleX(0.830);transform-origin:0 0;">N</div>
<div class="t" style="left:1828px;top:373.0px;font-size:21.7px;color:#c5c9ce;font-weight:bold;font-family:'Liberation Sans', sans-serif;font-style:normal;transform:scaleX(0.919);transform-origin:0 0;">S</div>
<div class="t" style="left:1766.5px;top:314.8px;font-size:21.7px;color:#c5c9ce;font-weight:bold;font-family:'Liberation Sans', sans-serif;font-style:normal;transform:scaleX(1.035);transform-origin:0 0;">W</div>
<div class="t" style="left:1887.2px;top:314.8px;font-size:21.7px;color:#c5c9ce;font-weight:bold;font-family:'Liberation Sans', sans-serif;font-style:normal;transform:scaleX(0.884);transform-origin:0 0;">E</div>
<div class="b" style="left:1806.2px;top:415.4px;width:56.4px;height:19.8px;background:#989ca2;border-radius:5px;"></div>
<div class="t" style="left:1811px;top:419.5px;font-size:13px;color:#50545a;font-weight:normal;font-family:'Liberation Sans', sans-serif;font-style:normal;transform:scaleX(0.956);transform-origin:0 0;">WCS</div>
<svg class="b" style="left:1849px;top:422px;" width="9" height="5.5" viewBox="0 0 9 5.5"><path d="M0.5 0.5H8.5L4.5 5Z" fill="none" stroke="#c4c7cc" stroke-width="0.9"/></svg>
<div class="b" style="left:1877.3px;top:466px;width:40px;height:259px;background:#5d6269;border-radius:3px 0 0 3px;"></div>
<svg class="b" style="left:1877.3px;top:466px;" width="40" height="259" viewBox="0 0 40 259"><circle cx="5" cy="5" r="3" fill="none" stroke="#50555c" stroke-width="1"/>
<circle cx="20" cy="34" r="12" fill="none" stroke="#474c53" stroke-width="2.5"/>
<circle cx="20" cy="34" r="6.5" fill="none" stroke="#474c53" stroke-width="2"/>
<path d="M19 62l1 2 1-2z" fill="#474c53"/>
<path d="M10 96 C8 88 10 80 13 82 V74 C13 71 16 71 16 74 V82 V70 C16 67 20 67 20 70 V82 V72 C20 69 24 69 24 72 V84 V77 C24 74 28 74 28 77 V90 C28 97 24 101 18 101 C14 101 12 99 10 96Z" fill="none" stroke="#474c53" stroke-width="1.8"/>
<path d="M8 110 L30 130 M30 110 L8 130" stroke="#474c53" stroke-width="1.8"/>
<circle cx="26" cy="128" r="5" fill="none" stroke="#474c53" stroke-width="2"/>
<path d="M19 145l1 2 1-2z" fill="#474c53"/>
<path d="M20 155V180M12 168H28" stroke="#474c53" stroke-width="2.5"/>
<ellipse cx="20" cy="172" rx="11" ry="4" fill="none" stroke="#474c53" stroke-width="1.6"/>
<path d="M19 197l1 2 1-2z" fill="#474c53"/>
<rect x="7" y="210" width="7" height="6" fill="none" stroke="#474c53" stroke-width="1.2"/><rect x="16" y="210" width="7" height="6" fill="none" stroke="#474c53" stroke-width="1.2"/><rect x="25" y="210" width="7" height="6" fill="none" stroke="#474c53" stroke-width="1.2"/>
<rect x="7" y="219" width="17" height="13" fill="none" stroke="#474c53" stroke-width="1.4"/><path d="M12 222L19 225.5L12 229Z" fill="#474c53"/>
<circle cx="33" cy="254" r="3" fill="none" stroke="#50555c" stroke-width="1"/></svg>
<svg class="b" style="left:10px;top:972px" width="80" height="22" viewBox="0 0 80 22"><path d="M0 0 H80 C77 3 74 18 72 22 H8 C6 18 3 3 0 0Z" fill="#3d4555"/></svg>
<svg class="b" style="left:86px;top:972px" width="82" height="22" viewBox="0 0 82 22"><path d="M0 0 H82 C79 3 76 18 74 22 H8 C6 18 3 3 0 0Z" fill="#323844"/></svg>
<svg class="b" style="left:165px;top:972px" width="84" height="22" viewBox="0 0 84 22"><path d="M0 0 H84 C81 3 78 18 76 22 H8 C6 18 3 3 0 0Z" fill="#323844"/></svg>
<svg class="b" style="left:254px;top:972px" width="29" height="19" viewBox="0 0 29 19"><path d="M0 0 H29 C26 3 26 15 24 19 H5 C3 15 3 3 0 0Z" fill="#323844"/></svg>
<div class="t" style="left:28.4px;top:975.7px;font-size:14.5px;color:#f0f2f5;font-weight:bold;font-family:'Liberation Sans', sans-serif;font-style:normal;">Model</div>
<div class="t" style="left:101.5px;top:975.7px;font-size:14.5px;color:#c9cdd4;font-weight:normal;font-family:'Liberation Sans', sans-serif;font-style:normal;">Layout1</div>
<div class="t" style="left:182.3px;top:975.7px;font-size:14.5px;color:#c9cdd4;font-weight:normal;font-family:'Liberation Sans', sans-serif;font-style:normal;">Layout2</div>
<svg class="b" style="left:263.4px;top:976.5px;" width="10" height="10" viewBox="0 0 10 10"><path d="M5 0V10M0 5H10" stroke="#c9cdd4" stroke-width="2"/></svg>
<div class="b" style="left:1246.9px;top:997.7px;width:139.0999999999999px;height:30.3px;background:#343b47;"></div>
<div class="b" style="left:1391px;top:997.7px;width:207px;height:30.3px;background:#343b47;"></div>
<div class="b" style="left:1602.5px;top:997.7px;width:129.5px;height:30.3px;background:#343b47;"></div>
<div class="b" style="left:1736px;top:997.7px;width:48px;height:30.3px;background:#343b47;"></div>
<div class="b" style="left:1787px;top:997.7px;width:28px;height:30.3px;background:#343b47;"></div>
<div class="b" style="left:1818.8px;top:997.7px;width:30.90000000000009px;height:30.3px;background:#343b47;"></div>
<div class="b" style="left:1856.8px;top:997.7px;width:61.200000000000045px;height:30.3px;background:#343b47;"></div>
<div class="b" style="left:1853px;top:1000px;width:1px;height:28px;background:#596170;"></div>
<div class="t" style="left:1251.5px;top:1006.7px;font-size:14.5px;color:#e7eaee;font-weight:normal;font-family:'Liberation Sans', sans-serif;font-style:normal;transform:scaleX(0.975);transform-origin:0 0;">MODEL</div>
<div class="b" style="left:1310px;top:997.7px;width:28px;height:30.3px;background:#5689c0;"></div>
<div class="b" style="left:1421.7px;top:997.7px;width:28.299999999999955px;height:30.3px;background:#5689c0;"></div>
<div class="b" style="left:1520.6px;top:997.7px;width:28.40000000000009px;height:30.3px;background:#5689c0;"></div>
<div class="b" style="left:1603px;top:997.7px;width:28px;height:30.3px;background:#5689c0;"></div>
<svg class="b" style="left:1313px;top:1000px;" width="22" height="24" viewBox="0 0 22 24"><path d="M6 3V22M11 3V22M16 3V22M2 7H21M2 12H21M2 17H21" stroke="#e8eef5" stroke-width="1.6"/></svg>
<svg class="b" style="left:1346.5px;top:1005px;" width="15" height="15" viewBox="0 0 15 15"><rect x="0" y="0" width="2.5" height="2.5" fill="#d3d7dd"/><rect x="0" y="6" width="2.5" height="2.5" fill="#d3d7dd"/><rect x="0" y="12" width="2.5" height="2.5" fill="#d3d7dd"/><rect x="6" y="0" width="2.5" height="2.5" fill="#d3d7dd"/><rect x="6" y="6" width="2.5" height="2.5" fill="#d3d7dd"/><rect x="6" y="12" width="2.5" height="2.5" fill="#d3d7dd"/><rect x="12" y="0" width="2.5" height="2.5" fill="#d3d7dd"/><rect x="12" y="6" width="2.5" height="2.5" fill="#d3d7dd"/><rect x="12" y="12" width="2.5" height="2.5" fill="#d3d7dd"/></svg>
<svg class="b" style="left:1374.6px;top:1010.0px;" width="8" height="5" viewBox="0 0 8 5"><path d="M0 0H8L4.0 5Z" fill="#d3d7dd"/></svg>
<svg class="b" style="left:1456.0px;top:1010.0px;" width="8" height="5" viewBox="0 0 8 5"><path d="M0 0H8L4.0 5Z" fill="#d3d7dd"/></svg>
<svg class="b" style="left:1506.0px;top:1010.0px;" width="8" height="5" viewBox="0 0 8 5"><path d="M0 0H8L4.0 5Z" fill="#d3d7dd"/></svg>
<svg class="b" style="left:1585.4px;top:1010.0px;" width="8" height="5" viewBox="0 0 8 5"><path d="M0 0H8L4.0 5Z" fill="#d3d7dd"/></svg>
<svg class="b" style="left:1719.5px;top:1010.0px;" width="8" height="5" viewBox="0 0 8 5"><path d="M0 0H8L4.0 5Z" fill="#d3d7dd"/></svg>
<svg class="b" style="left:1772.0px;top:1010.0px;" width="8" height="5" viewBox="0 0 8 5"><path d="M0 0H8L4.0 5Z" fill="#d3d7dd"/></svg>
<svg class="b" style="left:1395.8px;top:1003px;" width="20" height="20" viewBox="0 0 20 20"><path d="M2 0V18H20M2 12H7V18" fill="none" stroke="#d3d7dd" stroke-width="1.5"/></svg>
<svg class="b" style="left:1424px;top:1000px;" width="24" height="24" viewBox="0 0 24 24"><circle cx="11" cy="14" r="8" fill="none" stroke="#e8eef5" stroke-width="1.6"/><path d="M11 14L20 6M11 14H22" stroke="#e8eef5" stroke-width="1.6"/></svg>
<svg class="b" style="left:1476px;top:1001px;" width="18" height="22" viewBox="0 0 18 22"><path d="M2 2L16 20" stroke="#b8506a" stroke-width="1.1"/><path d="M9 0V22" stroke="#5aa86a" stroke-width="1.1"/><rect x="7" y="9" width="4" height="4" fill="none" stroke="#ddd" stroke-width="1"/></svg>
<svg class="b" style="left:1523px;top:1001px;" width="24" height="22" viewBox="0 0 24 22"><path d="M2 20H22M2 20L18 6" stroke="#e8eef5" stroke-width="1.6"/><rect x="8" y="12" width="4" height="4" fill="#e8eef5"/></svg>
<svg class="b" style="left:1555px;top:1000px;" width="22" height="24" viewBox="0 0 22 24"><rect x="1" y="1" width="5" height="5" fill="none" stroke="#d3d7dd" stroke-width="1.2"/><path d="M6 6H20V22H4V6" fill="none" stroke="#d3d7dd" stroke-width="1.5"/></svg>
<svg class="b" style="left:1605px;top:1000px;" width="24" height="24" viewBox="0 0 24 24"><path d="M12 2L4 22L12 17L20 22Z" fill="#e8eef5"/><circle cx="19" cy="6" r="3.5" fill="none" stroke="#e8eef5" stroke-width="1.2"/></svg>
<svg class="b" style="left:1637px;top:1000px;" width="20" height="24" viewBox="0 0 20 24"><path d="M10 3L2 22L10 17L18 22Z" fill="#d3d7dd"/><path d="M15 2L12 8H16L13 13" fill="none" stroke="#d3d7dd" stroke-width="1.2"/></svg>
<svg class="b" style="left:1667px;top:1000px;" width="19" height="24" viewBox="0 0 19 24"><path d="M9.5 3L1 22L9.5 17L18 22Z" fill="#d3d7dd"/></svg>
<div class="t" style="left:1698px;top:1006.5px;font-size:16px;color:#e7eaee;font-weight:normal;font-family:'Liberation Sans', sans-serif;font-style:normal;transform:scaleX(0.719);transform-origin:0 0;">1:1</div>
<svg class="b" style="left:1741px;top:1003px;" width="20" height="20" viewBox="0 0 20 20"><circle cx="10" cy="10" r="6.5" fill="none" stroke="#d3d7dd" stroke-width="4"/><path d="M10 0V20M0 10H20M3 3L17 17M17 3L3 17" stroke="#d3d7dd" stroke-width="3"/><circle cx="10" cy="10" r="3" fill="#343b47"/></svg>
<svg class="b" style="left:1791px;top:1003px;" width="19" height="19" viewBox="0 0 19 19"><path d="M9.5 0V19M0 9.5H19" stroke="#d3d7dd" stroke-width="2.2"/></svg>
<svg class="b" style="left:1823px;top:1001px;" width="22" height="24" viewBox="0 0 22 24"><rect x="1" y="1" width="8" height="8" fill="none" stroke="#d3d7dd" stroke-width="1.3"/><circle cx="16.5" cy="10.5" r="4.5" fill="none" stroke="#d3d7dd" stroke-width="1.3"/><path d="M6 15L1 23H11Z" fill="none" stroke="#d3d7dd" stroke-width="1.3"/></svg>
<svg class="b" style="left:1864px;top:1003px;" width="20" height="18" viewBox="0 0 20 18"><rect x="0.7" y="0.7" width="18.6" height="16.6" fill="none" stroke="#d3d7dd" stroke-width="1.3"/><path d="M4 14L9 9M4 14V10.5M4 14H7.5M16 4L11 9M16 4V7.5M16 4H12.5" fill="none" stroke="#d3d7dd" stroke-width="1.3"/></svg>
<svg class="b" style="left:1894px;top:1004px;" width="21" height="17" viewBox="0 0 21 17"><path d="M0 1.5H21M0 8.5H21M0 15.5H21" stroke="#d3d7dd" stroke-width="2.6"/></svg>
<div class="t" style="left:39.5px;top:215.4px;font-size:14.5px;color:#b9bec6;font-weight:normal;font-family:'Liberation Sans', sans-serif;font-style:normal;">Start</div>
<div class="t" style="left:193.4px;top:215.4px;font-size:14.5px;color:#dfe2e7;font-weight:normal;font-family:'Liberation Sans', sans-serif;font-style:normal;">Drawing1*</div>
<svg class="b" style="left:305.8px;top:216.5px;" width="12" height="10" viewBox="0 0 12 10"><path d="M0.5 0.5L11.5 9.5M11.5 0.5L0.5 9.5" stroke="#c8ccd2" stroke-width="1.8"/></svg>
<svg class="b" style="left:351.6px;top:218.5px;" width="10" height="9" viewBox="0 0 10 9"><path d="M5 0V9M0 4.5H10" stroke="#c8ccd2" stroke-width="2"/></svg>
<div class="b" style="left:20px;top:952px;width:245px;height:19px;background:#3b4453;"></div>
<svg class="b" style="left:0px;top:0px;" width="49" height="49" viewBox="0 0 49 49"><defs><linearGradient id="lg" x1="0" y1="0" x2="0" y2="1"><stop offset="0" stop-color="#e6e6e6"/><stop offset="0.5" stop-color="#b9b9b9"/><stop offset="1" stop-color="#8f8f8f"/></linearGradient>
<linearGradient id="lr" x1="0" y1="0" x2="0" y2="1"><stop offset="0" stop-color="#d42128"/><stop offset="1" stop-color="#b0181e"/></linearGradient></defs>
<rect x="0" y="0" width="48" height="48" fill="url(#lg)"/>
<path d="M48 0V49H0V48H48Z" fill="#0c0c0c"/>
<path d="M5 34L16 3H25L33 34H26L24 26H14L11 34Z M15.5 21H22.5L20 9Z" fill="url(#lr)" fill-rule="evenodd"/>
<path d="M37 21H46L41.5 26Z" fill="#333"/></svg>
<svg class="b" style="left:60px;top:4px;" width="20" height="17" viewBox="0 0 20 17"><path d="M0 0H13L19 5V17H0Z" fill="#dfe2e6"/><path d="M13 0V5H19" fill="#9aa0a8"/></svg>
<svg class="b" style="left:89.6px;top:4px;" width="21" height="17" viewBox="0 0 21 17"><path d="M0 2H6L8 4H16V7H4L0 17Z" fill="#dfe2e6"/><path d="M4 8H21L17 17H0Z" fill="#dfe2e6"/></svg>
<svg class="b" style="left:120px;top:3px;" width="20" height="20" viewBox="0 0 20 20"><path d="M0 0H20V20H0Z" fill="#c3c6cb"/><rect x="4" y="0.5" width="12" height="6.5" fill="#eef0f2"/><rect x="4" y="12" width="12" height="8" fill="#f4f5f6"/><rect x="5.5" y="14" width="2.5" height="4.5" fill="#222"/></svg>
<svg class="b" style="left:149.6px;top:3px;" width="22" height="21" viewBox="0 0 22 21"><path d="M0 0H18V11L13 20H0Z" fill="#b4b8be"/><rect x="4" y="0.5" width="10" height="6" fill="#e6e8eb"/><rect x="3" y="12" width="9" height="7" fill="#f0f1f3"/><rect x="4" y="14" width="2" height="4" fill="#222"/><path d="M11 19L19 9L22 11.5L14 21Z" fill="#f0c36a"/><path d="M19 9L22 11.5L23 8.5Z" fill="#e06060"/><path d="M11 19L14 21L10.5 21.5Z" fill="#f3d9b0"/></svg>
<svg class="b" style="left:180.7px;top:3px;" width="20" height="20" viewBox="0 0 20 20"><rect x="0.5" y="0.5" width="11" height="18" rx="1" fill="#6d7178" stroke="#b4b8be"/><path d="M9 12H13L14 13H19L17 19H8Z" fill="#f2c14e"/></svg>
<svg class="b" style="left:212px;top:3px;" width="16" height="20" viewBox="0 0 16 20"><rect x="4.5" y="0.5" width="10" height="18" rx="1" fill="#6d7178" stroke="#b4b8be"/><path d="M0 8H7V5L11 9.5L7 14V11H0Z" fill="#56a8e6"/></svg>
<svg class="b" style="left:239.7px;top:4px;" width="21" height="19" viewBox="0 0 21 19"><rect x="4" y="0" width="13" height="5" fill="#dfe2e6"/><rect x="0" y="5" width="21" height="9" fill="#dfe2e6"/><rect x="4" y="11" width="13" height="8" fill="#5aaee8"/></svg>
<svg class="b" style="left:270px;top:5px;" width="20" height="15" viewBox="0 0 20 15"><path d="M0 7L8 0V4C16 4 20 8 20 15C18 11 14 10 8 10V14Z" fill="#dfe2e6"/></svg>
<svg class="b" style="left:298.0px;top:9.0px;" width="8" height="5" viewBox="0 0 8 5"><path d="M0 0H8L4.0 5Z" fill="#dfe2e6"/></svg>
<svg class="b" style="left:314.8px;top:5px;" width="20" height="15" viewBox="0 0 20 15"><path d="M20 7L12 0V4C4 4 0 8 0 15C2 11 6 10 12 10V14Z" fill="#6e747c"/></svg>
<svg class="b" style="left:342.6px;top:9.0px;" width="8" height="5" viewBox="0 0 8 5"><path d="M0 0H8L4.0 5Z" fill="#9da3ab"/></svg>
<svg class="b" style="left:360px;top:6px;" width="10" height="13" viewBox="0 0 10 13"><path d="M0 0H10V1.5H0Z M0 5H10L5 11Z" fill="#dfe2e6"/></svg>
<svg class="b" style="left:1202px;top:8.8px;" width="6" height="9" viewBox="0 0 6 9"><path d="M0 0L6 4.5L0 9Z" fill="#e0e3e7"/></svg>
<div class="b" style="left:1215.8px;top:0px;width:222px;height:25.5px;background:#454e5f;"></div>
<div class="t" style="left:1219.5px;top:6.7px;font-size:14.5px;color:#a3a9b3;font-weight:normal;font-family:'Liberation Sans', sans-serif;font-style:italic;transform:scaleX(0.913);transform-origin:0 0;">Type a keyword or phrase</div>
<svg class="b" style="left:1444px;top:5px;" width="19" height="17" viewBox="0 0 19 17"><rect x="0" y="5" width="7" height="12" rx="1" fill="#dfe2e6"/><rect x="12" y="5" width="7" height="12" rx="1" fill="#dfe2e6"/><rect x="2" y="0" width="4" height="6" fill="#dfe2e6"/><rect x="13" y="0" width="4" height="6" fill="#dfe2e6"/><rect x="6" y="7" width="7" height="4" fill="#dfe2e6"/></svg>
<svg class="b" style="left:1475px;top:4px;" width="18" height="18" viewBox="0 0 18 18"><ellipse cx="9" cy="6" rx="5" ry="6" fill="#dfe2e6"/><path d="M0 18C0 12 4 11 9 11C14 11 18 12 18 18Z" fill="#dfe2e6"/></svg>
<div class="t" style="left:1501px;top:7.2px;font-size:14.5px;color:#e3e6ea;font-weight:normal;font-family:'Liberation Sans', sans-serif;font-style:normal;transform:scaleX(0.986);transform-origin:0 0;">Sign In</div>
<svg class="b" style="left:1605.8px;top:10.0px;" width="8" height="5" viewBox="0 0 8 5"><path d="M0 0H8L4.0 5Z" fill="#dfe2e6"/></svg>
<svg class="b" style="left:1626.8px;top:5px;" width="19" height="16" viewBox="0 0 19 16"><path d="M0 1H4L7 11H16L18 4H5" fill="none" stroke="#dfe2e6" stroke-width="2.2"/><circle cx="8" cy="14.5" r="1.6" fill="#dfe2e6"/><circle cx="15" cy="14.5" r="1.6" fill="#dfe2e6"/></svg>
<svg class="b" style="left:1656.8px;top:3px;" width="18" height="16" viewBox="0 0 18 16"><path d="M9 2L2 14H16Z" fill="none" stroke="#dfe2e6" stroke-width="2"/><circle cx="9" cy="2.5" r="2.5" fill="#dfe2e6"/><circle cx="2.5" cy="13.5" r="2.5" fill="#dfe2e6"/><circle cx="15.5" cy="13.5" r="2.5" fill="#dfe2e6"/></svg>
<svg class="b" style="left:1681.5px;top:10.0px;" width="8" height="5" viewBox="0 0 8 5"><path d="M0 0H8L4.0 5Z" fill="#dfe2e6"/></svg>
<div class="b" style="left:1702px;top:2px;width:1px;height:22px;background:#4a515c;"></div>
<svg class="b" style="left:1714px;top:3px;" width="19.5" height="19.5" viewBox="0 0 19.5 19.5"><circle cx="9.75" cy="9.75" r="9.75" fill="#e6e9ee"/><text x="9.75" y="15.5" text-anchor="middle" font-family="Liberation Sans" font-weight="bold" font-size="15" fill="#2a62b8">?</text></svg>
<svg class="b" style="left:1742.8px;top:10.0px;" width="8" height="5" viewBox="0 0 8 5"><path d="M0 0H8L4.0 5Z" fill="#dfe2e6"/></svg>
<div class="b" style="left:1839px;top:16.5px;width:11px;height:3px;background:#e6e9ed;"></div>
<svg class="b" style="left:1867.5px;top:6px;" width="16" height="14" viewBox="0 0 16 14"><rect x="1" y="4.5" width="10" height="8.5" fill="none" stroke="#e6e9ed" stroke-width="2"/><path d="M4 4V1H15V10H11" fill="none" stroke="#e6e9ed" stroke-width="2"/></svg>
<svg class="b" style="left:1898.8px;top:7px;" width="14" height="13" viewBox="0 0 14 13"><path d="M1 0.5L13 12.5M13 0.5L1 12.5" stroke="#e6e9ed" stroke-width="2"/></svg>
<div class="b" style="left:1861.8px;top:45px;width:9.2px;height:3px;background:#e6e9ed;"></div>
<svg class="b" style="left:1880.5px;top:33.8px;" width="15" height="14" viewBox="0 0 15 14"><rect x="1" y="4.5" width="9.5" height="8.5" fill="none" stroke="#e6e9ed" stroke-width="2"/><path d="M4 4V1H14V10H10.5" fill="none" stroke="#e6e9ed" stroke-width="2"/></svg>
<svg class="b" style="left:1903.5px;top:35px;" width="13" height="12.5" viewBox="0 0 13 12.5"><path d="M0.5 0.5L12.5 12M12.5 0.5L0.5 12" stroke="#e6e9ed" stroke-width="2"/></svg>
<svg class="b" style="left:950px;top:62px;" width="18" height="11" viewBox="0 0 18 11"><rect x="0" y="0" width="17" height="10" rx="2" fill="#dfe2e6"/><path d="M4 6H13L8.5 2Z" fill="#232833"/></svg>
<svg class="b" style="left:973.5px;top:65.0px;" width="7" height="4" viewBox="0 0 7 4"><path d="M0 0H7L3.5 4Z" fill="#dfe2e6"/></svg>
<svg class="b" style="left:0px;top:80px;" width="280" height="120" viewBox="0 0 280 120"><path d="M8.6 45 L45.4 8.5" stroke="#c9cdd3" stroke-width="1.1"/><rect x="7.0" y="43.4" width="3.2" height="3.2" fill="#6db4ea"/><rect x="43.8" y="6.9" width="3.2" height="3.2" fill="#6db4ea"/><path d="M61.5 36.5 H87.5 C96 36.5 99 33 99 26.8 C99 20.5 95 17 87.5 17" fill="none" stroke="#c9cdd3" stroke-width="1.1"/><rect x="59.9" y="34.9" width="3.2" height="3.2" fill="#6db4ea"/><rect x="85.9" y="34.9" width="3.2" height="3.2" fill="#6db4ea"/><rect x="85.9" y="15.4" width="3.2" height="3.2" fill="#6db4ea"/><circle cx="140.8" cy="27" r="20" fill="none" stroke="#c9cdd3" stroke-width="1.1"/><path d="M140.8 27 L152.5 15.5" stroke="#6db4ea" stroke-width="1.2"/><path d="M154.5 13.5 L148 15 L153 20Z" fill="#6db4ea"/><rect x="139.20000000000002" y="25.4" width="3.2" height="3.2" fill="#6db4ea"/><path d="M181 44 C184 26 195 13 216.4 9.3" fill="none" stroke="#c9cdd3" stroke-width="1.1"/><rect x="179.4" y="42.4" width="3.2" height="3.2" fill="#6db4ea"/><rect x="190.20000000000002" y="18.4" width="3.2" height="3.2" fill="#6db4ea"/><rect x="214.8" y="7.700000000000001" width="3.2" height="3.2" fill="#6db4ea"/><rect x="229" y="12.5" width="17.8" height="13" fill="none" stroke="#c9cdd3" stroke-width="1"/><rect x="227.7" y="11.2" width="2.6" height="2.6" fill="#6db4ea"/><rect x="245.5" y="24.2" width="2.6" height="2.6" fill="#6db4ea"/><ellipse cx="237.5" cy="50" rx="9.2" ry="7" fill="none" stroke="#c9cdd3" stroke-width="1"/><rect x="236.2" y="41.7" width="2.6" height="2.6" fill="#6db4ea"/><rect x="236.2" y="48.7" width="2.6" height="2.6" fill="#6db4ea"/><rect x="245.2" y="48.7" width="2.6" height="2.6" fill="#6db4ea"/><rect x="230" y="74" width="17" height="14" fill="none" stroke="#c9cdd3" stroke-width="1"/><path d="M229 71.5V92M248 71.5V92M227 74H250M227 88H250" stroke="#c9cdd3" stroke-width="1"/><path d="M231 87L240 75M236 88L246 75M231 81L236 75M241 88L247 80" stroke="#6db4ea" stroke-width="1"/></svg>
<svg class="b" style="left:280px;top:80px;" width="320" height="100" viewBox="0 0 320 100"><path d="M15 11 V27 M5 19 H25" stroke="#e8ebef" stroke-width="2"/><path d="M15 8 L10.5 13 H19.5Z M15 30 L10.5 25 H19.5Z M4 19 L9 14.5 V23.5Z M26 19 L21 14.5 V23.5Z" fill="#e8ebef"/><path d="M101 13.5 A8.5 8.5 0 1 0 106 12" fill="none" stroke="#c9cdd3" stroke-width="1.3"/><path d="M104 7 L109 12 L103 14Z" fill="#e8ebef"/><path d="M185 11 H208" stroke="#6db4ea" stroke-width="1" stroke-dasharray="2 1"/><path d="M188 11 L197 25 M196 11 L190 25" stroke="#e8ebef" stroke-width="1.6"/><circle cx="189" cy="28" r="2.8" fill="none" stroke="#e8ebef" stroke-width="1.4"/><circle cx="198" cy="28" r="2.8" fill="none" stroke="#e8ebef" stroke-width="1.4"/><path d="M284 21 L296 6 L300 9 L288 24Z" fill="#f0c85a"/><path d="M284 21 L288 24 L285 26 L282 24Z" fill="#e05050"/><path d="M280 26H287M289 26H300" stroke="#6db4ea" stroke-width="1"/><circle cx="9" cy="45" r="3.8" fill="none" stroke="#c9cdd3" stroke-width="1.1"/><path d="M14 42H22V48" fill="none" stroke="#c9cdd3" stroke-width="1.1"/><path d="M20 46L22 50L24 46Z" fill="#c9cdd3"/><circle cx="13" cy="55" r="4" fill="none" stroke="#6db4ea" stroke-width="1.1"/><circle cx="20" cy="55" r="4" fill="none" stroke="#6db4ea" stroke-width="1.1"/><path d="M97 61 L106 41 V61Z" fill="none" stroke="#c9cdd3" stroke-width="1.1"/><path d="M108 41 L117 61 H108Z" fill="none" stroke="#6db4ea" stroke-width="1.1"/><path d="M185 64 V52 C185 45 190 42 197 42 H204" fill="none" stroke="#c9cdd3" stroke-width="1.1"/><path d="M185 52 C185 45 190 42 197 42" fill="none" stroke="#6db4ea" stroke-width="1.2"/><path d="M283 46 H297 V58 H283Z M283 46 L287 42 H301 L297 46 M301 42 V54 L297 58" fill="none" stroke="#6db4ea" stroke-width="1.1"/><path d="M9 73 H16 V90 H9Z" fill="none" stroke="#c9cdd3" stroke-width="1.1"/><path d="M16 73 H21 L25 90 H16" fill="none" stroke="#6db4ea" stroke-width="1.1"/><path d="M13 86H21M19 84L22 86L19 88" fill="none" stroke="#c9cdd3" stroke-width="1"/><rect x="100" y="73" width="19" height="19" fill="none" stroke="#6db4ea" stroke-width="1.1"/><rect x="100" y="82" width="10" height="10" fill="none" stroke="#c9cdd3" stroke-width="1.1"/><rect x="189" y="74" width="6.5" height="6.5" fill="none" stroke="#6db4ea" stroke-width="1"/><rect x="198" y="74" width="6.5" height="6.5" fill="none" stroke="#c9cdd3" stroke-width="1"/><rect x="189" y="83" width="6.5" height="6.5" fill="none" stroke="#c9cdd3" stroke-width="1"/><rect x="198" y="83" width="6.5" height="6.5" fill="none" stroke="#6db4ea" stroke-width="1"/><path d="M300 76 H288 C283 76 281 79 281 82.5 C281 86 283 89 288 89 H300" fill="none" stroke="#6db4ea" stroke-width="1.1"/><path d="M300 79.5 H288.5 C286 79.5 285 81 285 82.5 C285 84 286 85.5 288.5 85.5 H300" fill="none" stroke="#c9cdd3" stroke-width="1.1"/></svg>
<svg class="b" style="left:590px;top:80px;" width="220" height="100" viewBox="0 0 220 100"><path d="M17.1 44 L29.2 8.9 H37.3 L49.4 44 H42.4 L39.6 35 H26.8 L24 44Z M28.2 30.7 H38.2 L33.2 15.8Z" fill="#dcdfe3" fill-rule="evenodd"/><path d="M79.4 7V46.7 M118.7 7V46.7 M81 14.6H117" stroke="#c9cdd3" stroke-width="1.1"/><path d="M80 14.6 L86 11.5 V17.7Z M118 14.6 L112 11.5 V17.7Z" fill="#c9cdd3"/><path d="M99 25 L96.8 33 H101.2Z M88 29 L92.5 35.5 L95 33Z M110 29 L105.5 35.5 L103 33Z M83 42.5 L91 39.5 V44Z M115 42.5 L107 39.5 V44Z" fill="#f3cf80"/><path d="M143.5 10.8V26.7 M162.5 10.8V26.7" stroke="#d8dbe0" stroke-width="1"/><path d="M145 18H161" stroke="#5d9ad6" stroke-width="2"/><path d="M144 18 L148 15.5 V20.5Z M162 18 L158 15.5 V20.5Z" fill="#6db4ea"/><circle cx="158" cy="48" r="3.3" fill="none" stroke="#c9cdd3" stroke-width="1.1"/><path d="M155 49 L150 50 L145 56" fill="none" stroke="#c9cdd3" stroke-width="1.1"/><path d="M143 58 L144 52 L148 55Z" fill="#c9cdd3"/><rect x="144" y="72.5" width="18" height="15.5" fill="none" stroke="#c9cdd3" stroke-width="1.1"/><path d="M144 76.5H162M144 80.5H162M144 84.5H162M149 76.5V88M154 76.5V88M158 76.5V88" stroke="#c9cdd3" stroke-width="0.9"/><path d="M233.9 36.6 L243.9 21.6 H267.9 L257.9 36.6Z" fill="#cfd2d6" stroke="#3b4453" stroke-width="0.8"/><path d="M233.9 29.2 L243.9 14.2 H267.9 L257.9 29.2Z" fill="#d3d6da" stroke="#3b4453" stroke-width="0.8"/><path d="M233.9 21.8 L243.9 6.8 H267.9 L257.9 21.8Z" fill="#dcdfe2" stroke="#3b4453" stroke-width="0.8"/></svg>
<svg class="b" style="left:846.6px;top:103.6px;" width="18" height="24" viewBox="0 0 18 24"><rect x="0" y="0" width="17.4" height="23.4" fill="#eef0f2" stroke="#3b4453" stroke-width="0.8"/><rect x="2.5" y="2.5" width="12.5" height="9" fill="#6fb8ec" stroke="#333" stroke-width="0.7"/><path d="M4 16H14M4 19.5H14" stroke="#888" stroke-width="0.9"/></svg>
<div class="b" style="left:882.8px;top:86px;width:258.7px;height:26.3px;background:linear-gradient(90deg,#475063,#515b6e);border:1px solid #2e3440;box-sizing:border-box;"></div>
<svg class="b" style="left:889.7px;top:89.7px;" width="14" height="18.5" viewBox="0 0 14 18.5"><circle cx="6.5" cy="6.5" r="6.5" fill="#f3c766"/><rect x="3.5" y="12" width="6" height="3" fill="#f3c766"/><path d="M3.5 14H9.5V16.5C9.5 18 3.5 18 3.5 16.5Z" fill="#f4f4f4"/></svg>
<svg class="b" style="left:911px;top:89.7px;" width="19" height="19" viewBox="0 0 19 19"><circle cx="9.5" cy="9.5" r="5.8" fill="#f3c766"/><path d="M9.5 0.5V3M9.5 16V18.5M0.5 9.5H3M16 9.5H18.5M3 3L4.8 4.8M14.2 14.2L16 16M3 16L4.8 14.2M14.2 4.8L16 3" stroke="#f3c766" stroke-width="1.2"/></svg>
<svg class="b" style="left:935.7px;top:89.7px;" width="19" height="19" viewBox="0 0 19 19"><rect x="0" y="8" width="13" height="10.5" fill="#f3c766"/><path d="M8 8V4.5C8 0 17 0 17 4.5V7" fill="none" stroke="#f3c766" stroke-width="2.2"/><rect x="5.5" y="11" width="1.8" height="4" fill="#6a5a2a"/></svg>
<div class="b" style="left:961px;top:91.4px;width:17.8px;height:17.3px;background:#ffffff;border:1.5px solid #111;box-sizing:border-box;"></div>
<div class="t" style="left:985.3px;top:93.2px;font-size:14.5px;color:#e3e6ea;font-weight:normal;font-family:'Liberation Sans', sans-serif;font-style:normal;">0</div>
<svg class="b" style="left:1130.0px;top:96.2px;" width="10" height="6" viewBox="0 0 10 6"><path d="M0 0H10L5.0 6Z" fill="#dfe2e7"/></svg>
<svg class="b" style="left:880px;top:115px;" width="150" height="60" viewBox="0 0 150 60"><path d="M6 12.899999999999999 L14 5.6 H23 L15 12.899999999999999Z" fill="#cdd0d4" stroke="#3b4453" stroke-width="0.7"/><circle cx="22.3" cy="17.6" r="4.3" fill="#5ac8d8"/><path d="M19.8 21H24.8V23C24.8 24.5 19.8 24.5 19.8 23Z" fill="#f0f0f0"/><path d="M36 26.099999999999998 L44 18.799999999999997 H53 L45 26.099999999999998Z" fill="#8ec4ec" stroke="#3b4453" stroke-width="0.7"/><path d="M36 21.5 L44 14.2 H53 L45 21.5Z" fill="#8ec4ec" stroke="#3b4453" stroke-width="0.7"/><path d="M36 16.9 L44 9.6 H53 L45 16.9Z" fill="#cdd0d4" stroke="#3b4453" stroke-width="0.7"/><path d="M36 12.3 L44 5.0 H53 L45 12.3Z" fill="#d3d6da" stroke="#3b4453" stroke-width="0.7"/><path d="M47 25 L55 17" stroke="#eef0f2" stroke-width="1.3"/><path d="M46 26 L46.5 20.5 L51 25Z" fill="#eef0f2"/><path d="M66 12.899999999999999 L74 5.6 H83 L75 12.899999999999999Z" fill="#cdd0d4" stroke="#3b4453" stroke-width="0.7"/><path d="M79.4 13.5V23.3M75 18.4H83.8M76.2 15.2L82.6 21.6M82.6 15.2L76.2 21.6" stroke="#4ac8c8" stroke-width="1.2"/><path d="M96 12.899999999999999 L104 5.6 H113 L105 12.899999999999999Z" fill="#cdd0d4" stroke="#3b4453" stroke-width="0.7"/><rect x="106.7" y="18" width="9.3" height="7" fill="#5ac8d8"/><path d="M108.3 18V15.3C108.3 12 114.4 12 114.4 15.3V18" fill="none" stroke="#5ac8d8" stroke-width="1.6"/><rect x="110.8" y="20" width="1.2" height="3" fill="#2a5a66"/><path d="M126 27.5 L134 20.2 H143 L135 27.5Z" fill="#cdd0d4" stroke="#3b4453" stroke-width="0.7"/><path d="M126 22.9 L134 15.6 H143 L135 22.9Z" fill="#cdd0d4" stroke="#3b4453" stroke-width="0.7"/><path d="M126 18.3 L134 11.0 H143 L135 18.3Z" fill="#8ec4ec" stroke="#3b4453" stroke-width="0.7"/><circle cx="136" cy="8.6" r="3.7" fill="#d3d6da"/><path d="M6 52.5 L14 45.2 H23 L15 52.5Z" fill="#cdd0d4" stroke="#3b4453" stroke-width="0.7"/><path d="M6 47.9 L14 40.6 H23 L15 47.9Z" fill="#cdd0d4" stroke="#3b4453" stroke-width="0.7"/><path d="M6 43.3 L14 36.0 H23 L15 43.3Z" fill="#cdd0d4" stroke="#3b4453" stroke-width="0.7"/><circle cx="22.5" cy="48.5" r="4.3" fill="#f3c766"/><path d="M20 52H25V54C25 55.5 20 55.5 20 54Z" fill="#f0f0f0"/><path d="M36 52.5 L44 45.2 H53 L45 52.5Z" fill="#8ec4ec" stroke="#3b4453" stroke-width="0.7"/><path d="M36 47.9 L44 40.6 H53 L45 47.9Z" fill="#cdd0d4" stroke="#3b4453" stroke-width="0.7"/><path d="M36 43.3 L44 36.0 H53 L45 43.3Z" fill="#cdd0d4" stroke="#3b4453" stroke-width="0.7"/><path d="M47 56 L55 48" stroke="#eef0f2" stroke-width="1.3"/><path d="M56 47 L55.5 52.5 L51 48Z" fill="#eef0f2"/><path d="M66 52.5 L74 45.2 H83 L75 52.5Z" fill="#cdd0d4" stroke="#3b4453" stroke-width="0.7"/><path d="M66 47.9 L74 40.6 H83 L75 47.9Z" fill="#cdd0d4" stroke="#3b4453" stroke-width="0.7"/><path d="M66 43.3 L74 36.0 H83 L75 43.3Z" fill="#cdd0d4" stroke="#3b4453" stroke-width="0.7"/><circle cx="79.7" cy="50" r="3.8" fill="#f3c766"/><path d="M79.7 43.5V45M79.7 55V56.5M73.2 50H74.7M84.7 50H86.2M75.2 45.5L76.2 46.5M83.2 53.5L84.2 54.5M75.2 54.5L76.2 53.5M83.2 46.5L84.2 45.5" stroke="#f3c766" stroke-width="1.4"/><path d="M96 44.3 L104 37 H113 L105 44.3Z" fill="#cdd0d4" stroke="#3b4453" stroke-width="0.7"/><rect x="104" y="48" width="10" height="7.5" fill="#f3c766"/><rect x="108.3" y="50" width="1.2" height="3" fill="#6a5a2a"/><path d="M111 48V45.5C111 42 116 42 116 45.5V47" fill="none" stroke="#f3c766" stroke-width="1.5"/><path d="M126 52.5 L134 45.2 H143 L135 52.5Z" fill="#cdd0d4" stroke="#3b4453" stroke-width="0.7"/><path d="M126 47.9 L134 40.6 H143 L135 47.9Z" fill="#cdd0d4" stroke="#3b4453" stroke-width="0.7"/><path d="M126 43.3 L134 36.0 H143 L135 43.3Z" fill="#cdd0d4" stroke="#3b4453" stroke-width="0.7"/><path d="M136 55 L143 48" stroke="#f3c766" stroke-width="4"/><path d="M141.5 45.5 L146 50" stroke="#eef0f2" stroke-width="2.2"/></svg>
<svg class="b" style="left:1150px;top:84px;" width="100" height="90" viewBox="0 0 100 90"><path d="M20 1 H36 L42 7 V31.7 H20Z" fill="#7fc3f0"/><path d="M36 1 V7 H42Z" fill="#d8ecfa"/><rect x="3" y="14" width="26" height="19" fill="#6b7078" stroke="#9a9ea5" stroke-width="1.2"/><circle cx="27.8" cy="31.7" r="8.8" fill="#61666e" stroke="#a5a9af" stroke-width="1.2"/><path d="M27.8 22.9V31.7H36.6" stroke="#a5a9af" stroke-width="1.1" fill="none"/><rect x="1.5" y="32" width="3" height="3" fill="#ddd"/><rect x="52" y="12.4" width="11" height="9" fill="#6b7078" stroke="#a5a9af" stroke-width="1"/><circle cx="63.7" cy="21.2" r="3.7" fill="#61666e" stroke="#a5a9af" stroke-width="1"/><path d="M65 4L66 7.5L69.5 6L67.5 9.4L70.5 11.5L66.8 11.8L66.5 15.5L64.5 12.5L61.5 14L62.5 10.5L59.5 8.5L63 8Z" fill="#f3c766"/><rect x="52" y="41.3" width="11" height="10.6" fill="#6b7078" stroke="#a5a9af" stroke-width="1"/><circle cx="65.9" cy="50.5" r="3.8" fill="#61666e" stroke="#a5a9af" stroke-width="1"/><path d="M61 47L69 38L71.5 40L63.5 49Z" fill="#f3d27a"/><path d="M69 38L71.5 40L73 37Z" fill="#e05a5a"/><path d="M51 71 L59 68 L68.5 77.5 L61 86.4 L51 76Z" fill="#d8dbdf"/><circle cx="55" cy="72" r="1" fill="#333"/><path d="M56 76L62 81" stroke="#777" stroke-width="1" stroke-dasharray="1.5 1"/><path d="M60 73L69 64L71.5 66L62.5 75Z" fill="#f3d27a"/><path d="M69 64L71.5 66L73 62.5Z" fill="#e05a5a"/></svg>
<svg class="b" style="left:1262px;top:86px;" width="60" height="46" viewBox="0 0 60 46"><rect x="4" y="2" width="25" height="40" fill="#dcdee1"/><rect x="7" y="5" width="19" height="13" fill="#5aaee8" stroke="#555" stroke-width="0.7"/><path d="M8 26H24M8 33H24" stroke="#888" stroke-width="1.1"/><rect x="11" y="24" width="2" height="4" fill="#666"/><rect x="19" y="31" width="2" height="4" fill="#666"/><path d="M27 34 L36 25 L43 32 L34 41Z" fill="#f3c766"/><path d="M36 25 L41 20 L44 21 L45 24 L48 27 L43 32Z" fill="#eef0f2"/></svg>
<div class="b" style="left:1325px;top:89.8px;width:20px;height:20.2px;background:conic-gradient(#f6b43a,#f5853a,#ee5a48,#e0506e,#9a5ad8,#4a86e6,#35bcc0,#6cc85a,#d8cc44,#f6b43a);border-radius:50%;"></div>
<svg class="b" style="left:1325px;top:119.7px;" width="20" height="20.3" viewBox="0 0 20 20.3"><rect x="0" y="0" width="20" height="2.5" fill="#dfe2e6"/><rect x="0" y="5" width="20" height="3.5" fill="#dfe2e6"/><rect x="0" y="11" width="20" height="4" fill="#dfe2e6"/><rect x="0" y="16.5" width="20" height="3.8" fill="#dfe2e6"/></svg>
<svg class="b" style="left:1325px;top:152px;" width="20" height="16" viewBox="0 0 20 16"><path d="M0 1H20M0 5.5H20M0 10H20M0 14.5H20" stroke="#c4c7cc" stroke-width="1.6" stroke-dasharray="3 1.5"/></svg>
<div class="b" style="left:1348.4px;top:86.5px;width:170px;height:26.5px;background:linear-gradient(90deg,#465063,#4d576a);border:1px solid #2c323c;box-sizing:border-box;"></div>
<svg class="b" style="left:1506.0px;top:96.7px;" width="10" height="6" viewBox="0 0 10 6"><path d="M0 0H10L5.0 6Z" fill="#dfe2e7"/></svg>
<div class="b" style="left:1348.4px;top:117px;width:170px;height:26.5px;background:linear-gradient(90deg,#465063,#4d576a);border:1px solid #2c323c;box-sizing:border-box;"></div>
<svg class="b" style="left:1506.0px;top:127.19999999999999px;" width="10" height="6" viewBox="0 0 10 6"><path d="M0 0H10L5.0 6Z" fill="#dfe2e7"/></svg>
<div class="b" style="left:1348.4px;top:147px;width:170px;height:26.5px;background:linear-gradient(90deg,#465063,#4d576a);border:1px solid #2c323c;box-sizing:border-box;"></div>
<svg class="b" style="left:1506.0px;top:157.2px;" width="10" height="6" viewBox="0 0 10 6"><path d="M0 0H10L5.0 6Z" fill="#dfe2e7"/></svg>
<div class="b" style="left:1362.6px;top:89.8px;width:20.4px;height:20.2px;background:#ffffff;border:1px solid #ddd;box-sizing:border-box;"></div>
<div class="t" style="left:1395px;top:93.7px;font-size:14.5px;color:#e6e9ed;font-weight:normal;font-family:'Liberation Sans', sans-serif;font-style:normal;">ByLayer</div>
<div class="b" style="left:1352.4px;top:129px;width:80.3px;height:1.3px;background:#e6e9ed;"></div>
<div class="t" style="left:1434.8px;top:124.2px;font-size:14.5px;color:#e6e9ed;font-weight:normal;font-family:'Liberation Sans', sans-serif;font-style:normal;">ByLayer</div>
<div class="b" style="left:1352.4px;top:160px;width:80.3px;height:1.3px;background:#e6e9ed;"></div>
<div class="t" style="left:1434.8px;top:154.2px;font-size:14.5px;color:#e6e9ed;font-weight:normal;font-family:'Liberation Sans', sans-serif;font-style:normal;">ByLayer</div>
<svg class="b" style="left:1507px;top:186px;" width="9" height="9" viewBox="0 0 9 9"><path d="M1 1L8 8M8 3V8H3" fill="none" stroke="#dfe2e7" stroke-width="1.3"/></svg>
<svg class="b" style="left:1891px;top:186px;" width="9" height="9" viewBox="0 0 9 9"><path d="M1 1L8 8M8 3V8H3" fill="none" stroke="#dfe2e7" stroke-width="1.3"/></svg>
<svg class="b" style="left:1526px;top:84px;" width="80" height="92" viewBox="0 0 80 92"><path d="M6 4H2V42H6M28 4H32V42H28" fill="none" stroke="#c4c7cc" stroke-width="1.3"/><rect x="8" y="10" width="13" height="10" fill="#5b9fd8" stroke="#9ecbf0" stroke-width="0.8"/><circle cx="15" cy="30" r="6.5" fill="#8a8f96"/><path d="M31 1L33 8L40 6L35 11L41 15L34 15L34 22L30 17L25 21L27 14L20 12L27 10L25 4Z" fill="#f3c766"/><path d="M53 4H51V20H53M63 4H65V20H63" fill="none" stroke="#c4c7cc" stroke-width="1"/><rect x="54" y="6" width="6" height="5" fill="#5b9fd8"/><circle cx="57" cy="16" r="3" fill="#8a8f96"/><path d="M65 12L71 18M71 12L65 18" stroke="#e05050" stroke-width="1.6"/><path d="M53 36H51V52H53M63 36H65V52H63" fill="none" stroke="#c4c7cc" stroke-width="1"/><rect x="54" y="38" width="6" height="5" fill="none" stroke="#aaa" stroke-width="0.8"/><circle cx="57" cy="48" r="3" fill="#8a8f96"/><path d="M64 53L72 44L74 46L66 55Z" fill="#f3c766"/><path d="M72 44L74 46L75 43Z" fill="#e05050"/><rect x="48" y="63" width="29" height="26.8" fill="#2f4d6a" stroke="#5aaee8" stroke-width="1.2"/><path d="M54 67H52V83H54M62 67H64V83H62" fill="none" stroke="#c4c7cc" stroke-width="1"/><rect x="55" y="69" width="5" height="5" fill="none" stroke="#aaa" stroke-width="0.8"/><circle cx="58" cy="79" r="3" fill="#56c26a"/><path d="M63 72V84L66 81L69 86L71 85L68 80H72Z" fill="#eef0f2"/></svg>
<svg class="b" style="left:1630px;top:84px;" width="95" height="92" viewBox="0 0 95 92"><rect x="3.5" y="18" width="36.5" height="8.5" fill="#e8c06a"/><path d="M6 18V21M9 18V22M12 18V21M15 18V22M18 18V21M21 18V23M24 18V21M27 18V22M30 18V21M33 18V22M36 18V21" stroke="#8a6d2a" stroke-width="0.8"/><path d="M68 7V19L71 16L74 21L76 20L73 15H77Z" fill="#eef0f2"/><path d="M74 3L71 9H75L72 14" fill="none" stroke="#f3c766" stroke-width="1.5"/><rect x="76" y="11" width="13" height="11" fill="#dfe2e6"/><path d="M78 14H87M78 17H87M78 20H87" stroke="#5aaee8" stroke-width="1"/><rect x="70" y="36" width="18" height="17" fill="#4caf50" opacity="0.85" stroke="#7be07f" stroke-width="1" stroke-dasharray="2 1"/><rect x="74" y="40" width="10" height="10" fill="#7ad07e"/><path d="M80 45V57L83 54L86 59L88 58L85 53H89Z" fill="#eef0f2"/><rect x="72" y="67" width="16" height="21" rx="1" fill="#c9ccd1"/><rect x="74" y="69" width="12" height="4" fill="#8a8f96"/><path d="M74 76H86M74 80H86M74 84H86M78 75V87M82 75V87" stroke="#8a8f96" stroke-width="1.2"/></svg>
<svg class="b" style="left:1740px;top:84px;" width="85" height="92" viewBox="0 0 85 92"><rect x="6" y="6" width="30" height="36" rx="1" fill="#d4a460"/><rect x="14" y="1" width="14" height="7" rx="2" fill="#e9ecef"/><rect x="16" y="4" width="10" height="4" fill="#bfc3c8"/><path d="M17 17H32L38 23V44H17Z" fill="#e2e4e7"/><path d="M32 17V23H38" fill="#b9bdc2"/><path d="M57 6H71V16L66 22H57Z" fill="#dfe2e6"/><path d="M59 9H69M59 12H69M59 15H66" stroke="#9a9ea5" stroke-width="0.8"/><path d="M66 11L77 23M77 11L66 23" stroke="#eef0f2" stroke-width="1.2"/><circle cx="67" cy="23" r="2.5" fill="none" stroke="#eef0f2" stroke-width="1.2"/><circle cx="76" cy="23" r="2.5" fill="none" stroke="#eef0f2" stroke-width="1.2"/><path d="M58 37H66L69 40V52H58Z" fill="#b4b8be"/><path d="M62 41H70L73 44V56H62Z" fill="#dfe2e6"/></svg>
<svg class="b" style="left:1846px;top:91px;" width="41" height="32" viewBox="0 0 41 32"><path d="M0 0H17V17H41V31.5H0Z" fill="#d5d8dc"/></svg>
<svg class="b" style="left:172px;top:288px;" width="80" height="23" viewBox="0 0 80 23"><rect x="1" y="6" width="11" height="11" fill="#5b9fd8" stroke="#1a2a3a" stroke-width="1"/><rect x="5" y="10" width="11" height="11" fill="#9fc9ee" stroke="#1a2a3a" stroke-width="1"/><circle cx="14" cy="5" r="4.5" fill="#2aa84a"/><path d="M14 2V8M11 5H17" stroke="#fff" stroke-width="1.6"/><circle cx="37" cy="11" r="4" fill="none" stroke="#dfe2e6" stroke-width="1.4"/><path d="M37 1V7M37 15V21M27 11H33M41 11H47" stroke="#dfe2e6" stroke-width="1.4"/><circle cx="65" cy="9" r="3.5" fill="none" stroke="#dfe2e6" stroke-width="1.3"/><path d="M65 1V5.5M65 12.5V16M58 9H61.5M68.5 9H72" stroke="#dfe2e6" stroke-width="1.3"/><path d="M75 1L71 8H75L72 13" fill="none" stroke="#f3c766" stroke-width="1.5"/><rect x="68" y="13" width="11" height="9" fill="#dfe2e6"/><path d="M68 16H79M68 19H79M71.5 13V22M75 13V22" stroke="#555" stroke-width="0.7"/></svg>
<div class="b" style="left:0px;top:971px;width:1918px;height:1px;background:#3a414c;"></div>
</body></html>
